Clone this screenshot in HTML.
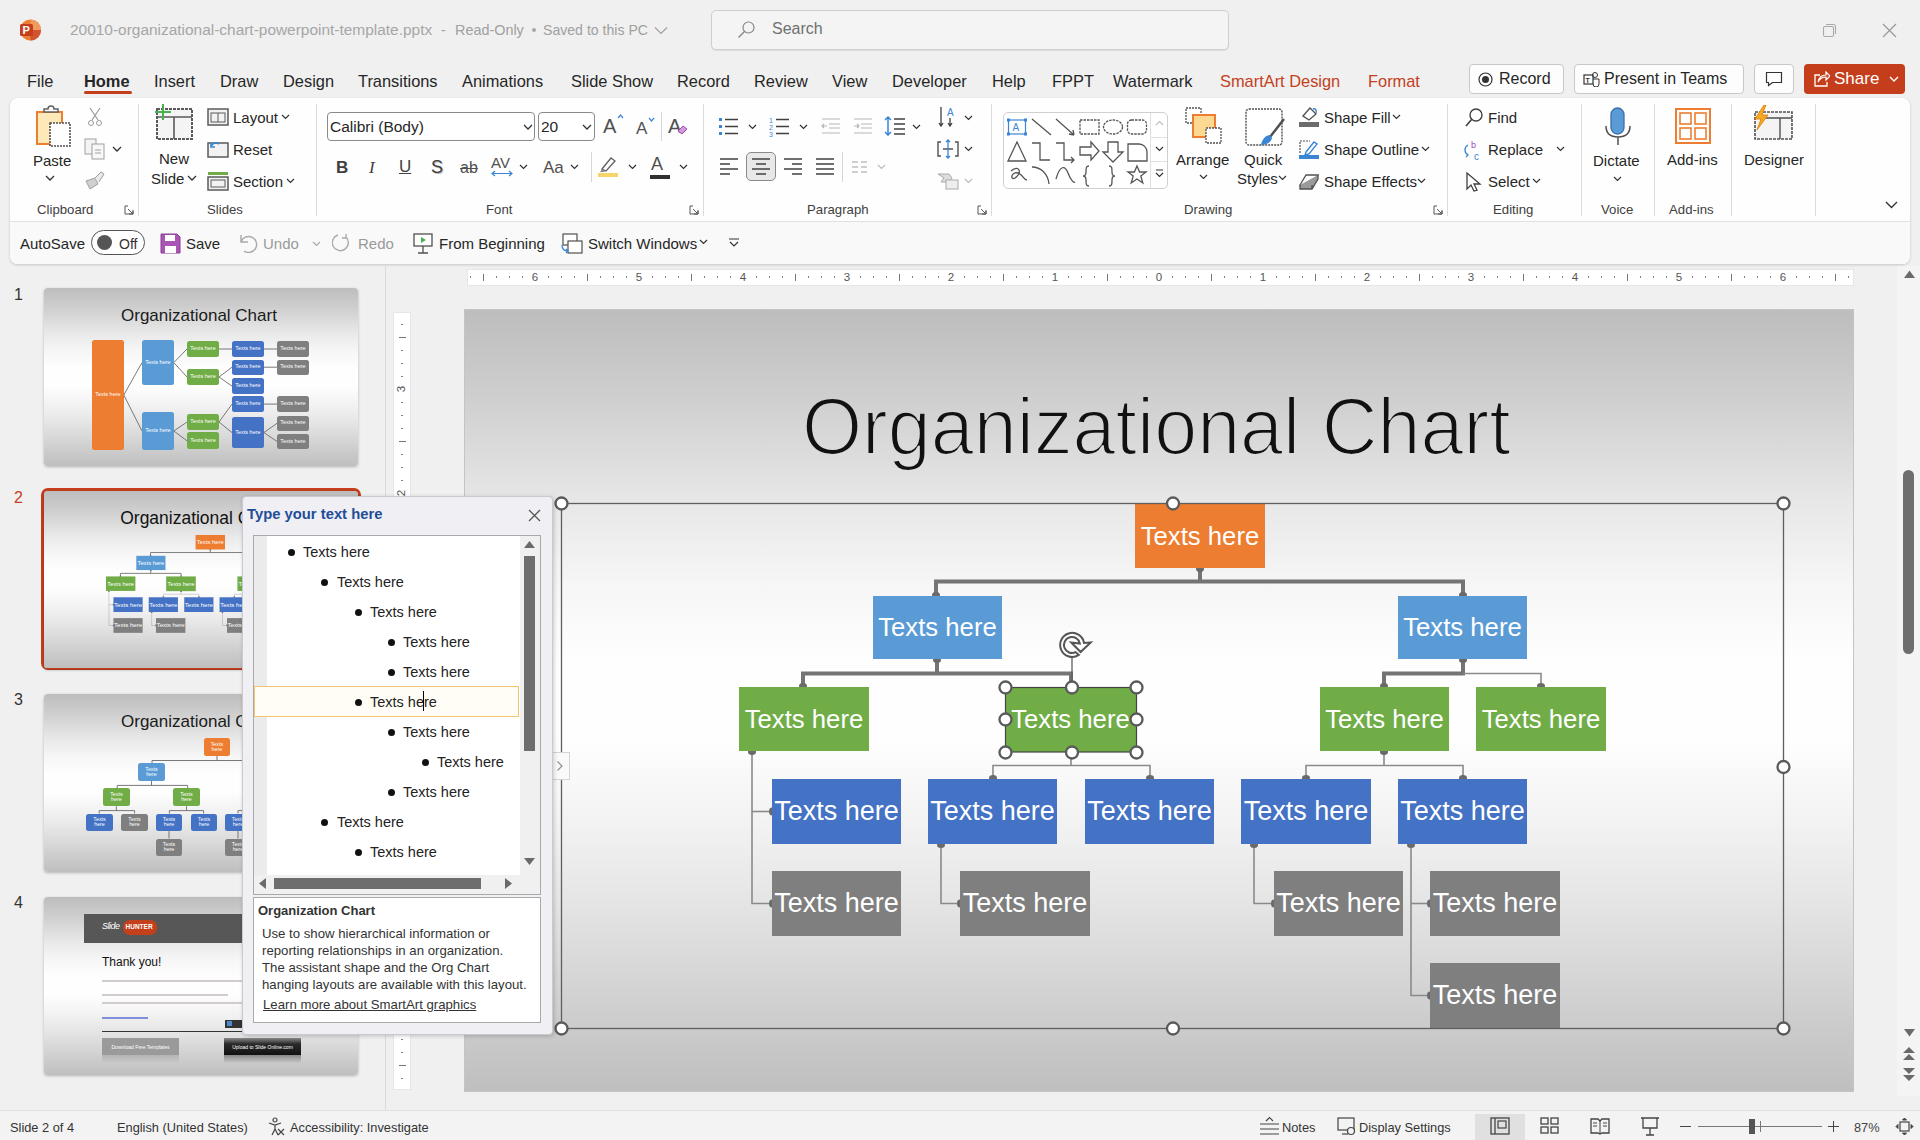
<!DOCTYPE html>
<html><head><meta charset="utf-8">
<style>
*{box-sizing:border-box;margin:0;padding:0}
html,body{width:1920px;height:1140px;overflow:hidden;background:#f0f0f0;font-family:"Liberation Sans",sans-serif;color:#262626}
.a{position:absolute}
.t{position:absolute;white-space:nowrap;line-height:1}
/* title */
#ppicon{left:19px;top:19px;width:22px;height:22px;border-radius:50%;background:#c43e1c}
#fname{left:70px;top:22px;font-size:15.45px;color:#a6a6a6}
#search{left:711px;top:10px;width:518px;height:40px;border:1px solid #cfcfcf;border-radius:5px;background:#f4f4f4;box-shadow:0 1px 1px rgba(0,0,0,.08)}
/* tabs */
.tab{position:absolute;top:73px;font-size:16.4px;color:#262626;white-space:nowrap;line-height:1}
.btn{position:absolute;border:1px solid #c8c8c8;border-radius:4px;background:#fdfdfd}
/* ribbon */
#ribbon{left:10px;top:98px;width:1900px;height:166px;background:#fefefe;border-radius:8px;box-shadow:0 1px 3px rgba(0,0,0,.18)}
.sep{position:absolute;width:1px;background:#dcdcdc}
.glab{position:absolute;top:203px;font-size:13.2px;color:#404040;white-space:nowrap;line-height:1}
.rt{position:absolute;font-size:15px;color:#262626;white-space:nowrap;line-height:1}
/* slide */
#slide{left:465px;top:310px;width:1388px;height:781px;box-shadow:0 0 0 1px #c4c4c4}
.slidebg{background:linear-gradient(#bdbdbd 0%,#d0d0d0 12%,#e8e8e8 25%,#f6f6f6 35%,#fefefe 45%,#fefefe 55%,#f2f2f2 66%,#e6e6e6 75%,#d8d8d8 84%,#cbcbcb 92%,#bfbfbf 100%)}
.thumb{width:314px;height:178px;overflow:hidden;border-radius:4px;box-shadow:0 1px 3px rgba(0,0,0,.25)}
.bx{position:absolute;color:#fff;font-size:27px;display:flex;align-items:center;justify-content:center;white-space:nowrap}
.or{background:#ed7d31}.lb{background:#5b9bd5}.gr{background:#70ad47}.db{background:#4472c4}.gy{background:#7f7f7f}
.tp{position:absolute;font-size:9px;color:#111;line-height:1}
.tpt{position:absolute;font-size:14.5px;color:#222;white-space:nowrap;line-height:1}
.status{position:absolute;top:1122px;font-size:12.8px;color:#333;white-space:nowrap;line-height:1}
</style></head>
<body>
<!-- TITLE BAR -->
<svg class="a" style="left:18px;top:18px" width="24" height="24" viewBox="0 0 24 24"><circle cx="12.5" cy="12" r="10.5" fill="#ed7d31"/><path d="M12.5 1.5A10.5 10.5 0 0 1 23 12H12.5z" fill="#f09a5f"/><path d="M12.5 12H23A10.5 10.5 0 0 1 12.5 22.5z" fill="#d35230"/><rect x="2" y="6" width="13" height="12" rx="1.5" fill="#c43e1c"/><text x="4.6" y="15.8" font-size="11" font-weight="bold" fill="#fff" font-family="Liberation Sans">P</text></svg>
<div class="t" id="fname">20010-organizational-chart-powerpoint-template.pptx</div><div class="t" style="left:441px;top:23px;font-size:14.4px;color:#a0a0a0">-</div><div class="t" style="left:455px;top:23px;font-size:14.4px;color:#a0a0a0">Read-Only</div><div class="a" style="left:532px;top:28px;width:4px;height:4px;border-radius:50%;background:#a8a8a8"></div><div class="t" style="left:543px;top:23px;font-size:14.1px;color:#a0a0a0">Saved to this PC</div>
<div class="a" id="search"></div>
<div class="t" style="left:772px;top:21px;font-size:16px;color:#707070">Search</div>

<!-- TABS -->
<div class="tab" style="left:27px">File</div>
<div class="tab" style="left:84px;font-weight:bold">Home</div>
<div class="a" style="left:84px;top:91px;width:48px;height:3px;background:#c43e1c;border-radius:2px"></div>
<div class="tab" style="left:154px">Insert</div>
<div class="tab" style="left:220px">Draw</div>
<div class="tab" style="left:283px">Design</div>
<div class="tab" style="left:358px">Transitions</div>
<div class="tab" style="left:462px">Animations</div>
<div class="tab" style="left:571px">Slide Show</div>
<div class="tab" style="left:677px">Record</div>
<div class="tab" style="left:754px">Review</div>
<div class="tab" style="left:832px">View</div>
<div class="tab" style="left:892px">Developer</div>
<div class="tab" style="left:992px">Help</div>
<div class="tab" style="left:1052px">FPPT</div>
<div class="tab" style="left:1113px">Watermark</div>
<div class="tab" style="left:1220px;color:#c43e1c">SmartArt Design</div>
<div class="tab" style="left:1368px;color:#c43e1c">Format</div>

<!-- RIBBON -->
<div class="a" id="ribbon"></div>
<div class="a" style="left:10px;top:221px;width:1900px;height:1px;background:#e1e1e1"></div>
<div class="a" style="left:10px;top:222px;width:1900px;height:42px;background:#f9f9f9;border-radius:0 0 8px 8px"></div>
<!-- Clipboard -->
<svg class="a" style="left:34px;top:104px" width="40" height="44" viewBox="0 0 40 44">
 <rect x="3" y="8" width="25" height="32" fill="#fde9b8" stroke="#ed7d31" stroke-width="2"/>
 <path d="M10 8v-3h4a3 3 0 0 1 6 0h4v3z" fill="#fff" stroke="#616161" stroke-width="1.5"/>
 <rect x="16" y="19" width="20" height="23" fill="#fff" stroke="#505050" stroke-width="1.6" stroke-dasharray="2 1"/>
</svg>
<div class="rt" style="left:33px;top:153px">Paste</div>
<svg class="a" style="left:45px;top:175px" width="10" height="7"><path d="M1 1l4 4 4-4" fill="none" stroke="#333" stroke-width="1.3"/></svg>
<svg class="a" style="left:86px;top:107px" width="18" height="20" viewBox="0 0 18 20"><path d="M4 1l8 12M14 1L6 13" stroke="#9a9a9a" stroke-width="1.2" fill="none"/><circle cx="5" cy="16" r="2.5" fill="none" stroke="#9a9a9a"/><circle cx="13" cy="16" r="2.5" fill="none" stroke="#9a9a9a"/></svg>
<svg class="a" style="left:84px;top:138px" width="24" height="22" viewBox="0 0 24 22"><rect x="1" y="1" width="11" height="15" fill="#f4f4f4" stroke="#a0a0a0"/><rect x="8" y="6" width="12" height="15" fill="#f8f8f8" stroke="#a0a0a0"/><path d="M11 12h6M11 15h6" stroke="#a0a0a0"/></svg>
<svg class="a" style="left:112px;top:146px" width="10" height="7"><path d="M1 1l4 4 4-4" fill="none" stroke="#333" stroke-width="1.3"/></svg>
<svg class="a" style="left:84px;top:170px" width="22" height="20" viewBox="0 0 22 20"><path d="M2 11l9-3 3 6-8 5z" fill="#d0d0d0" stroke="#a0a0a0"/><path d="M11 8l6-6 3 2-5 8" fill="#e8e8e8" stroke="#a0a0a0"/></svg>
<div class="glab" style="left:37px">Clipboard</div>
<svg class="a" style="left:124px;top:205px" width="10" height="10"><path d="M1 1h3M1 1v8h8V6M4 4l5 5M9 5v4H5" fill="none" stroke="#555" stroke-width="1"/></svg>
<div class="sep" style="left:138px;top:104px;height:112px"></div>
<!-- Slides -->
<svg class="a" style="left:152px;top:103px" width="44" height="40" viewBox="0 0 44 40"><rect x="5" y="6" width="35" height="30" fill="#f4f4f4" stroke="#5a5a5a" stroke-width="2" stroke-dasharray="3 1"/><path d="M5 14h35M22 14v22" stroke="#5a5a5a" stroke-width="1.6"/><path d="M11 1v16M3 9h16" stroke="#4caf50" stroke-width="2"/></svg>
<div class="rt" style="left:159px;top:151px">New</div>
<div class="rt" style="left:151px;top:171px">Slide</div>
<svg class="a" style="left:187px;top:175px" width="10" height="7"><path d="M1 1l4 4 4-4" fill="none" stroke="#333" stroke-width="1.3"/></svg>
<svg class="a" style="left:207px;top:108px" width="22" height="18" viewBox="0 0 22 18"><rect x="1" y="1" width="20" height="16" fill="#f2f2f2" stroke="#5a5a5a" stroke-width="1.5"/><rect x="4" y="5" width="14" height="9" fill="none" stroke="#5a5a5a"/><path d="M11 5v9" stroke="#5a5a5a"/></svg>
<div class="rt" style="left:233px;top:110px">Layout</div>
<svg class="a" style="left:281px;top:114px" width="9" height="6"><path d="M1 1l3.5 3.5 3.5-3.5" fill="none" stroke="#333" stroke-width="1.2"/></svg>
<svg class="a" style="left:207px;top:140px" width="22" height="18" viewBox="0 0 22 18"><rect x="1" y="3" width="20" height="14" fill="#f2f2f2" stroke="#5a5a5a" stroke-width="1.5"/><path d="M4 7a5 5 0 0 1 8-3M4 3v4h4" fill="none" stroke="#3a86d4" stroke-width="1.6"/></svg>
<div class="rt" style="left:233px;top:142px">Reset</div>
<svg class="a" style="left:207px;top:171px" width="22" height="20" viewBox="0 0 22 20"><rect x="1" y="1" width="20" height="3" fill="#70ad47"/><rect x="1" y="6" width="20" height="13" fill="#f2f2f2" stroke="#5a5a5a" stroke-width="1.5"/><rect x="4" y="9" width="14" height="7" fill="none" stroke="#5a5a5a"/></svg>
<div class="rt" style="left:233px;top:174px">Section</div>
<svg class="a" style="left:286px;top:178px" width="9" height="6"><path d="M1 1l3.5 3.5 3.5-3.5" fill="none" stroke="#333" stroke-width="1.2"/></svg>
<div class="glab" style="left:207px">Slides</div>
<div class="sep" style="left:316px;top:104px;height:112px"></div>
<!-- Font -->
<div class="a" style="left:327px;top:112px;width:208px;height:29px;border:1px solid #8a8a8a;border-radius:4px;background:#fff"></div>
<div class="rt" style="left:330px;top:119px;font-size:15.5px">Calibri (Body)</div>
<svg class="a" style="left:523px;top:124px" width="10" height="7"><path d="M1 1l4 4 4-4" fill="none" stroke="#333" stroke-width="1.3"/></svg>
<div class="a" style="left:538px;top:112px;width:57px;height:29px;border:1px solid #8a8a8a;border-radius:4px;background:#fff"></div>
<div class="rt" style="left:541px;top:119px;font-size:15.5px">20</div>
<svg class="a" style="left:582px;top:124px" width="10" height="7"><path d="M1 1l4 4 4-4" fill="none" stroke="#333" stroke-width="1.3"/></svg>
<div class="rt" style="left:603px;top:116px;font-size:20px;color:#505050">A</div><svg class="a" style="left:617px;top:114px" width="7" height="5"><path d="M1 4l2.5-3 2.5 3" fill="none" stroke="#3a86d4" stroke-width="1.2"/></svg>
<div class="rt" style="left:636px;top:120px;font-size:17px;color:#505050">A</div><svg class="a" style="left:648px;top:117px" width="7" height="5"><path d="M1 1l2.5 3 2.5-3" fill="none" stroke="#3a86d4" stroke-width="1.2"/></svg>
<div class="sep" style="left:661px;top:112px;height:29px;background:#d6d6d6"></div>
<div class="rt" style="left:668px;top:116px;font-size:20px;color:#505050">A</div><svg class="a" style="left:676px;top:125px" width="12" height="10"><path d="M2 6l5-5 4 3-5 5z" fill="#d29be0" stroke="#9b4db4"/></svg>
<div class="rt" style="left:336px;top:159px;font-size:17px;font-weight:bold;color:#404040">B</div>
<div class="rt" style="left:369px;top:159px;font-size:17px;font-style:italic;font-family:'Liberation Serif',serif;color:#404040">I</div>
<div class="rt" style="left:399px;top:158px;font-size:17px;text-decoration:underline;color:#404040">U</div>
<div class="rt" style="left:431px;top:158px;font-size:18px;color:#404040;text-shadow:1px 1px 0 #bbb">S</div>
<div class="rt" style="left:460px;top:160px;font-size:16px;text-decoration:line-through;color:#505050">ab</div>
<div class="rt" style="left:491px;top:155px;font-size:15px;color:#505050">AV</div>
<svg class="a" style="left:491px;top:170px" width="22" height="7"><path d="M1 3.5h20M4 1l-3 2.5 3 2.5M18 1l3 2.5-3 2.5" fill="none" stroke="#3a86d4" stroke-width="1.2"/></svg>
<svg class="a" style="left:519px;top:164px" width="9" height="6"><path d="M1 1l3.5 3.5 3.5-3.5" fill="none" stroke="#333" stroke-width="1.2"/></svg>
<div class="rt" style="left:543px;top:159px;font-size:17px;color:#505050">Aa</div>
<svg class="a" style="left:570px;top:164px" width="9" height="6"><path d="M1 1l3.5 3.5 3.5-3.5" fill="none" stroke="#333" stroke-width="1.2"/></svg>
<div class="sep" style="left:591px;top:152px;height:30px;background:#d6d6d6"></div>
<svg class="a" style="left:598px;top:155px" width="22" height="23" viewBox="0 0 22 23"><path d="M4 14l9-11 4 3-9 10z" fill="#fff" stroke="#606060" stroke-width="1.3"/><path d="M4 14l-2 3h5" fill="#888"/><rect x="0" y="18" width="20" height="4" fill="#f7d56a"/></svg>
<svg class="a" style="left:628px;top:164px" width="9" height="6"><path d="M1 1l3.5 3.5 3.5-3.5" fill="none" stroke="#333" stroke-width="1.2"/></svg>
<div class="rt" style="left:651px;top:155px;font-size:18px;color:#505050">A</div>
<div class="a" style="left:650px;top:175px;width:20px;height:4px;background:#303030"></div>
<svg class="a" style="left:679px;top:164px" width="9" height="6"><path d="M1 1l3.5 3.5 3.5-3.5" fill="none" stroke="#333" stroke-width="1.2"/></svg>
<div class="glab" style="left:486px">Font</div>
<svg class="a" style="left:689px;top:205px" width="10" height="10"><path d="M1 1h3M1 1v8h8V6M4 4l5 5M9 5v4H5" fill="none" stroke="#555" stroke-width="1"/></svg>
<div class="sep" style="left:703px;top:104px;height:112px"></div>
<!-- Paragraph -->
<svg class="a" style="left:718px;top:116px" width="22" height="20" viewBox="0 0 22 20"><rect x="1" y="2" width="3" height="3" fill="#3a86d4"/><rect x="1" y="9" width="3" height="3" fill="#3a86d4"/><rect x="1" y="16" width="3" height="3" fill="#3a86d4"/><path d="M7 3.5h13M7 10.5h13M7 17.5h13" stroke="#404040" stroke-width="1.3"/></svg>
<svg class="a" style="left:748px;top:124px" width="9" height="6"><path d="M1 1l3.5 3.5 3.5-3.5" fill="none" stroke="#333" stroke-width="1.2"/></svg>
<svg class="a" style="left:769px;top:115px" width="22" height="22" viewBox="0 0 22 22"><text x="0" y="8" font-size="7" fill="#3a86d4" font-family="Liberation Sans">1</text><text x="0" y="15" font-size="7" fill="#3a86d4" font-family="Liberation Sans">2</text><text x="0" y="22" font-size="7" fill="#3a86d4" font-family="Liberation Sans">3</text><path d="M7 4.5h13M7 11.5h13M7 18.5h13" stroke="#404040" stroke-width="1.3"/></svg>
<svg class="a" style="left:799px;top:124px" width="9" height="6"><path d="M1 1l3.5 3.5 3.5-3.5" fill="none" stroke="#333" stroke-width="1.2"/></svg>
<svg class="a" style="left:821px;top:117px" width="20" height="18" viewBox="0 0 20 18"><path d="M1 2h18M8 7h11M8 11h11M1 16h18M6 9H1M3 7l-2 2 2 2" stroke="#b5b5b5" stroke-width="1.2" fill="none"/></svg>
<svg class="a" style="left:853px;top:117px" width="20" height="18" viewBox="0 0 20 18"><path d="M1 2h18M8 7h11M8 11h11M1 16h18M1 9h5M4 7l2 2-2 2" stroke="#b5b5b5" stroke-width="1.2" fill="none"/></svg>
<svg class="a" style="left:884px;top:116px" width="22" height="20" viewBox="0 0 22 20"><path d="M4 1v18M1 4l3-3 3 3M1 16l3 3 3-3" stroke="#3a86d4" stroke-width="1.5" fill="none"/><path d="M10 3h11M10 8h11M10 13h11M10 18h11" stroke="#404040" stroke-width="1.4"/></svg>
<svg class="a" style="left:912px;top:124px" width="9" height="6"><path d="M1 1l3.5 3.5 3.5-3.5" fill="none" stroke="#333" stroke-width="1.2"/></svg>
<svg class="a" style="left:938px;top:106px" width="20" height="22" viewBox="0 0 20 22"><path d="M3 1v19M1 17l2 3 2-3M12 12v8M10 17l2 3 2-3" stroke="#404040" stroke-width="1.3" fill="none"/><text x="9" y="10" font-size="10" fill="#3a86d4" font-family="Liberation Sans">A</text></svg>
<svg class="a" style="left:964px;top:115px" width="9" height="6"><path d="M1 1l3.5 3.5 3.5-3.5" fill="none" stroke="#333" stroke-width="1.2"/></svg>
<svg class="a" style="left:937px;top:139px" width="22" height="20" viewBox="0 0 22 20"><path d="M4 3H1v14h3M18 3h3v14h-3M6 10h10" stroke="#505050" stroke-width="1.4" fill="none"/><path d="M11 1v18M9 3l2-2 2 2M9 17l2 2 2-2" stroke="#3a86d4" stroke-width="1.3" fill="none"/></svg>
<svg class="a" style="left:964px;top:146px" width="9" height="6"><path d="M1 1l3.5 3.5 3.5-3.5" fill="none" stroke="#333" stroke-width="1.2"/></svg>
<svg class="a" style="left:937px;top:172px" width="22" height="18" viewBox="0 0 22 18"><path d="M1 2h11l3 4-3 4H4l3-4z" fill="#ddd" stroke="#aaa"/><rect x="9" y="8" width="12" height="9" fill="#eee" stroke="#aaa"/></svg>
<svg class="a" style="left:964px;top:178px" width="9" height="6"><path d="M1 1l3.5 3.5 3.5-3.5" fill="none" stroke="#bbb" stroke-width="1.2"/></svg>
<svg class="a" style="left:719px;top:157px" width="20" height="18" viewBox="0 0 20 18"><path d="M1 2h18M1 7h10M1 12h18M1 17h10" stroke="#404040" stroke-width="1.3"/></svg>
<div class="a" style="left:746px;top:152px;width:30px;height:29px;border:1px solid #8a8a8a;border-radius:5px;background:#e8e8e8"></div>
<svg class="a" style="left:751px;top:157px" width="20" height="18" viewBox="0 0 20 18"><path d="M1 2h18M5 7h10M1 12h18M5 17h10" stroke="#404040" stroke-width="1.3"/></svg>
<svg class="a" style="left:783px;top:157px" width="20" height="18" viewBox="0 0 20 18"><path d="M1 2h18M9 7h10M1 12h18M9 17h10" stroke="#404040" stroke-width="1.3"/></svg>
<svg class="a" style="left:815px;top:157px" width="20" height="18" viewBox="0 0 20 18"><path d="M1 2h18M1 7h18M1 12h18M1 17h18" stroke="#404040" stroke-width="1.3"/></svg>
<div class="sep" style="left:842px;top:152px;height:30px;background:#d6d6d6"></div>
<svg class="a" style="left:851px;top:161px" width="18" height="12" viewBox="0 0 18 12"><path d="M1 1h6M1 6h6M1 11h6M10 1h6M10 6h6M10 11h6" stroke="#c0c0c0" stroke-width="1.3"/></svg>
<svg class="a" style="left:877px;top:164px" width="9" height="6"><path d="M1 1l3.5 3.5 3.5-3.5" fill="none" stroke="#bbb" stroke-width="1.2"/></svg>
<div class="glab" style="left:807px">Paragraph</div>
<svg class="a" style="left:977px;top:205px" width="10" height="10"><path d="M1 1h3M1 1v8h8V6M4 4l5 5M9 5v4H5" fill="none" stroke="#555" stroke-width="1"/></svg>
<div class="sep" style="left:991px;top:104px;height:112px"></div>
<!-- Drawing -->
<div class="a" style="left:1003px;top:112px;width:165px;height:77px;border:1px solid #d0d0d0;border-radius:5px;background:#fff"></div>
<div class="a" style="left:1150px;top:113px;width:1px;height:75px;background:#e0e0e0"></div>
<div class="a" style="left:1151px;top:137px;width:16px;height:1px;background:#e0e0e0"></div>
<div class="a" style="left:1151px;top:161px;width:16px;height:1px;background:#e0e0e0"></div>
<svg class="a" style="left:1155px;top:120px" width="9" height="6"><path d="M1 5l3.5-3.5 3.5 3.5" fill="none" stroke="#c0c0c0" stroke-width="1.2"/></svg>
<svg class="a" style="left:1155px;top:146px" width="9" height="6"><path d="M1 1l3.5 3.5 3.5-3.5" fill="none" stroke="#333" stroke-width="1.2"/></svg>
<svg class="a" style="left:1155px;top:169px" width="9" height="10"><path d="M1 1h7M1 4l3.5 3.5 3.5-3.5" fill="none" stroke="#333" stroke-width="1.2"/></svg>
<svg class="a" style="left:1005px;top:115px" width="144" height="72" viewBox="0 0 144 72" fill="none" stroke="#555" stroke-width="1.3">
 <rect x="3.5" y="5" width="17" height="14" stroke="#3a86d4" stroke-width="1.2"/><rect x="2" y="3.5" width="3" height="3" fill="#3a86d4" stroke="none"/><rect x="19" y="3.5" width="3" height="3" fill="#3a86d4" stroke="none"/><rect x="2" y="17.5" width="3" height="3" fill="#3a86d4" stroke="none"/><rect x="19" y="17.5" width="3" height="3" fill="#3a86d4" stroke="none"/><text x="7.5" y="16" font-size="10" fill="#3a86d4" stroke="none" font-family="Liberation Sans">A</text>
 <path d="M27 4L46 20M51 4L69 20M69 20l-5-1M69 20l-1-5"/>
 <rect x="75" y="5" width="19" height="14" stroke-dasharray="2.5 1"/>
 <ellipse cx="108" cy="12" rx="9.5" ry="7" stroke-dasharray="2.5 1"/>
 <rect x="122.5" y="5" width="19" height="14" rx="4" stroke-dasharray="2.5 1"/>
 <path d="M3 46L12 27L21 46z M27 28h8v17h10 M51 28h8v17h10M66 42l3 3-3 3 M75 32h11v-5l8 9-8 9v-5h-11z M103 27h10v10h5l-10 10-10-10h5z M123 29h11a8 8 0 0 1 8 8v9h-19z"/>
 <path d="M6 56c8-7 12 2 4 7-6 3-3-9 5-4 4 3 4 6 7 6 M27 52c9 0 16 7 17 17 M51 64C55 50 60 50 63 58S69 68 70 67 M84 51c-3 0-3 2-3 6 0 3-1 4-3 4 2 0 3 1 3 4 0 4 0 6 3 6 M104 51c3 0 3 2 3 6 0 3 1 4 3 4-2 0-3 1-3 4 0 4 0 6-3 6 M132 51l2.6 6h6.4l-5.2 4 2 7-5.8-4-5.8 4 2-7-5.2-4h6.4z"/>
</svg>
<svg class="a" style="left:1185px;top:107px" width="38" height="38" viewBox="0 0 38 38"><rect x="1" y="1" width="15" height="15" fill="#fff" stroke="#505050" stroke-width="1.3" stroke-dasharray="2 1"/><rect x="8" y="8" width="22" height="22" fill="#fcd891" stroke="#ed7d31" stroke-width="2"/><rect x="21" y="21" width="15" height="15" fill="#fff" stroke="#505050" stroke-width="1.3" stroke-dasharray="2 1"/></svg>
<div class="rt" style="left:1176px;top:152px">Arrange</div>
<svg class="a" style="left:1199px;top:174px" width="9" height="6"><path d="M1 1l3.5 3.5 3.5-3.5" fill="none" stroke="#333" stroke-width="1.2"/></svg>
<svg class="a" style="left:1244px;top:107px" width="42" height="42" viewBox="0 0 42 42"><rect x="2" y="2" width="36" height="36" rx="3" fill="#fff" stroke="#505050" stroke-width="1.4" stroke-dasharray="2 1"/><path d="M40 12L26 30" stroke="#505050" stroke-width="2.5"/><path d="M26 28c-4 0-8 4-9 10 6 0 10-3 11-7z" fill="#3a86d4"/></svg>
<div class="rt" style="left:1244px;top:152px">Quick</div>
<div class="rt" style="left:1237px;top:171px">Styles</div>
<svg class="a" style="left:1278px;top:175px" width="9" height="6"><path d="M1 1l3.5 3.5 3.5-3.5" fill="none" stroke="#333" stroke-width="1.2"/></svg>
<svg class="a" style="left:1298px;top:106px" width="22" height="22" viewBox="0 0 22 22"><path d="M5 10l7-8 6 6-7 6z" fill="#fff" stroke="#505050" stroke-width="1.3"/><path d="M15 3c2-1 4 1 3 4" stroke="#3a86d4" stroke-width="1.4" fill="none"/><rect x="1" y="16" width="20" height="5" fill="#6b6b6b"/></svg>
<div class="rt" style="left:1324px;top:110px">Shape Fill</div>
<svg class="a" style="left:1392px;top:114px" width="9" height="6"><path d="M1 1l3.5 3.5 3.5-3.5" fill="none" stroke="#333" stroke-width="1.2"/></svg>
<svg class="a" style="left:1298px;top:138px" width="22" height="22" viewBox="0 0 22 22"><path d="M2 15V3h10" stroke="#505050" stroke-width="1.2" fill="none" stroke-dasharray="2 1"/><path d="M8 14l8-10 3 2-8 10-4 1z" fill="#fff" stroke="#3a86d4" stroke-width="1.4"/><rect x="1" y="17" width="20" height="4" fill="#3a86d4"/></svg>
<div class="rt" style="left:1324px;top:142px">Shape Outline</div>
<svg class="a" style="left:1421px;top:146px" width="9" height="6"><path d="M1 1l3.5 3.5 3.5-3.5" fill="none" stroke="#333" stroke-width="1.2"/></svg>
<svg class="a" style="left:1298px;top:171px" width="22" height="20" viewBox="0 0 22 20"><path d="M2 14l6-10h12l-6 10z" fill="#fff" stroke="#505050" stroke-width="1.3"/><path d="M2 14v4h12l6-10v-4M14 14v4" fill="#9a9a9a" stroke="#505050" stroke-width="1.3"/></svg>
<div class="rt" style="left:1324px;top:174px">Shape Effects</div>
<svg class="a" style="left:1417px;top:178px" width="9" height="6"><path d="M1 1l3.5 3.5 3.5-3.5" fill="none" stroke="#333" stroke-width="1.2"/></svg>
<div class="glab" style="left:1184px">Drawing</div>
<svg class="a" style="left:1433px;top:205px" width="10" height="10"><path d="M1 1h3M1 1v8h8V6M4 4l5 5M9 5v4H5" fill="none" stroke="#555" stroke-width="1"/></svg>
<div class="sep" style="left:1447px;top:104px;height:112px"></div>
<!-- Editing -->
<svg class="a" style="left:1464px;top:107px" width="20" height="20" viewBox="0 0 20 20"><circle cx="12" cy="8" r="6" fill="none" stroke="#404040" stroke-width="1.4"/><path d="M8 12l-6 7" stroke="#404040" stroke-width="1.6"/></svg>
<div class="rt" style="left:1488px;top:110px">Find</div>
<svg class="a" style="left:1462px;top:139px" width="22" height="22" viewBox="0 0 22 22"><text x="9" y="9" font-size="9" fill="#9b4db4" font-family="Liberation Sans">b</text><text x="12" y="21" font-size="10" fill="#3a86d4" font-family="Liberation Sans">c</text><path d="M6 6c-4 2-4 8 0 10M4 14l2 2-2 2" fill="none" stroke="#3a86d4" stroke-width="1.3"/></svg>
<div class="rt" style="left:1488px;top:142px">Replace</div>
<svg class="a" style="left:1556px;top:146px" width="9" height="6"><path d="M1 1l3.5 3.5 3.5-3.5" fill="none" stroke="#333" stroke-width="1.2"/></svg>
<svg class="a" style="left:1465px;top:172px" width="18" height="20" viewBox="0 0 18 20"><path d="M2 1v16l4-4 3 6 3-1-3-6h6z" fill="#fff" stroke="#404040" stroke-width="1.3"/></svg>
<div class="rt" style="left:1488px;top:174px">Select</div>
<svg class="a" style="left:1532px;top:178px" width="9" height="6"><path d="M1 1l3.5 3.5 3.5-3.5" fill="none" stroke="#333" stroke-width="1.2"/></svg>
<div class="glab" style="left:1493px">Editing</div>
<div class="sep" style="left:1581px;top:104px;height:112px"></div>
<!-- Voice -->
<svg class="a" style="left:1604px;top:106px" width="28" height="40" viewBox="0 0 28 40"><rect x="7" y="2" width="13" height="26" rx="6.5" fill="#5b9bd5" stroke="#3a6fb0" stroke-width="1.3"/><path d="M2 20c0 8 5 11 12 11s12-3 12-11M14 31v8" fill="none" stroke="#505050" stroke-width="1.5"/></svg>
<div class="rt" style="left:1593px;top:153px">Dictate</div>
<svg class="a" style="left:1613px;top:176px" width="9" height="6"><path d="M1 1l3.5 3.5 3.5-3.5" fill="none" stroke="#333" stroke-width="1.2"/></svg>
<div class="glab" style="left:1601px">Voice</div>
<div class="sep" style="left:1654px;top:104px;height:112px"></div>
<!-- Add-ins -->
<svg class="a" style="left:1675px;top:108px" width="36" height="36" viewBox="0 0 36 36"><rect x="1" y="1" width="34" height="34" fill="none" stroke="#ed7d31" stroke-width="2"/><rect x="5" y="5" width="11" height="11" fill="none" stroke="#ed7d31" stroke-width="1.6"/><rect x="20" y="5" width="11" height="11" fill="none" stroke="#ed7d31" stroke-width="1.6"/><rect x="5" y="20" width="11" height="11" fill="none" stroke="#ed7d31" stroke-width="1.6"/><rect x="20" y="20" width="11" height="11" fill="none" stroke="#ed7d31" stroke-width="1.6"/></svg>
<div class="rt" style="left:1667px;top:152px">Add-ins</div>
<div class="glab" style="left:1669px">Add-ins</div>
<div class="sep" style="left:1731px;top:104px;height:112px"></div>
<!-- Designer -->
<svg class="a" style="left:1752px;top:105px" width="42" height="36" viewBox="0 0 42 36"><rect x="3" y="7" width="37" height="27" fill="#f4f4f4" stroke="#505050" stroke-width="1.6" stroke-dasharray="3 1"/><path d="M3 13h37M28 13v21" stroke="#505050" stroke-width="1.4"/><path d="M12 0L3 14h6l-4 11 11-15h-6l4-10z" fill="#f7a823" stroke="#e07b00" stroke-width=".8"/></svg>
<div class="rt" style="left:1744px;top:152px">Designer</div>
<div class="sep" style="left:1815px;top:104px;height:112px"></div>
<svg class="a" style="left:1885px;top:201px" width="13" height="8"><path d="M1 1l5.5 5.5 5.5-5.5" fill="none" stroke="#333" stroke-width="1.4"/></svg>

<!-- Tab row buttons -->
<div class="btn" style="left:1469px;top:64px;width:95px;height:30px"></div>
<svg class="a" style="left:1478px;top:72px" width="15" height="15"><circle cx="7.5" cy="7.5" r="6.5" fill="none" stroke="#333" stroke-width="1.2"/><circle cx="7.5" cy="7.5" r="3.5" fill="#333"/></svg>
<div class="rt" style="left:1499px;top:71px;font-size:16px">Record</div>
<div class="btn" style="left:1574px;top:64px;width:170px;height:30px"></div>
<svg class="a" style="left:1583px;top:71px" width="17" height="16" viewBox="0 0 17 16"><rect x="1" y="4" width="9" height="9" fill="#fff" stroke="#333" stroke-width="1.2"/><text x="2.5" y="11.5" font-size="7" font-weight="bold" fill="#333" font-family="Liberation Sans">T</text><circle cx="12" cy="4" r="2.5" fill="none" stroke="#333"/><path d="M10 8h6v5a3 3 0 0 1-6 0" fill="none" stroke="#333"/></svg>
<div class="rt" style="left:1604px;top:71px;font-size:16px">Present in Teams</div>
<div class="btn" style="left:1754px;top:64px;width:40px;height:30px"></div>
<svg class="a" style="left:1765px;top:71px" width="18" height="16" viewBox="0 0 18 16"><path d="M1.5 1.5h15v10h-9l-4 3v-3h-2z" fill="none" stroke="#333" stroke-width="1.2"/></svg>
<div class="a" style="left:1804px;top:64px;width:101px;height:30px;background:#c43e1c;border-radius:4px"></div>
<svg class="a" style="left:1813px;top:71px" width="17" height="16" viewBox="0 0 17 16"><path d="M7 4H2v11h12v-4" fill="none" stroke="#fff" stroke-width="1.3"/><path d="M5 11c1-5 4-7 8-7V1l4 4-4 4V6c-3 0-6 1-8 5z" fill="none" stroke="#fff" stroke-width="1.2"/></svg>
<div class="rt" style="left:1834px;top:70px;font-size:17px;color:#fff">Share</div>
<svg class="a" style="left:1889px;top:76px" width="10" height="7"><path d="M1 1l4 4 4-4" fill="none" stroke="#fff" stroke-width="1.4"/></svg>

<!-- window controls -->
<svg class="a" style="left:1822px;top:23px" width="15" height="15"><rect x="1.5" y="3.5" width="10" height="10" rx="1.5" fill="none" stroke="#aaa" stroke-width="1.1"/><path d="M4 1.5h7.5a2 2 0 0 1 2 2V11" fill="none" stroke="#aaa" stroke-width="1.1"/></svg>
<svg class="a" style="left:1882px;top:23px" width="15" height="15"><path d="M1 1l13 13M14 1L1 14" stroke="#999" stroke-width="1.2"/></svg>
<svg class="a" style="left:737px;top:20px" width="19" height="19"><circle cx="11.5" cy="7.5" r="5.5" fill="none" stroke="#888" stroke-width="1.2"/><path d="M7.5 11.5L1.5 17.5" stroke="#888" stroke-width="1.4"/></svg>
<svg class="a" style="left:654px;top:26px" width="14" height="9"><path d="M1 1.5l6 6 6-6" fill="none" stroke="#a0a0a0" stroke-width="1.2"/></svg>

<!-- QAT -->
<div class="rt" style="left:20px;top:236px">AutoSave</div>
<div class="a" style="left:91px;top:230px;width:54px;height:25px;border:1px solid #555;border-radius:13px;background:#fff"></div>
<div class="a" style="left:97px;top:235px;width:15px;height:15px;border-radius:50%;background:#555"></div>
<div class="rt" style="left:119px;top:237px;font-size:14px;color:#333">Off</div>
<svg class="a" style="left:160px;top:233px" width="21" height="21" viewBox="0 0 21 21"><path d="M1 1h16l3 3v16H1z" fill="#a855b3" stroke="#8b3f98"/><rect x="5" y="2" width="10" height="6" fill="#fff"/><rect x="5" y="13" width="11" height="7" fill="#fff"/></svg>
<div class="rt" style="left:186px;top:236px">Save</div>
<svg class="a" style="left:238px;top:233px" width="20" height="20" viewBox="0 0 20 20"><path d="M3 2v7h7" fill="none" stroke="#aaa" stroke-width="1.4"/><path d="M3 9a8 8 0 1 1 3 9" fill="none" stroke="#aaa" stroke-width="1.4"/></svg>
<div class="rt" style="left:263px;top:236px;color:#9a9a9a">Undo</div>
<svg class="a" style="left:312px;top:241px" width="9" height="6"><path d="M1 1l3.5 3.5 3.5-3.5" fill="none" stroke="#aaa" stroke-width="1.2"/></svg>
<svg class="a" style="left:332px;top:233px" width="20" height="20" viewBox="0 0 20 20"><path d="M6 2a8 8 0 1 0 8 2M14 1v4h-4" fill="none" stroke="#aaa" stroke-width="1.4"/></svg>
<div class="rt" style="left:358px;top:236px;color:#9a9a9a">Redo</div>
<svg class="a" style="left:413px;top:233px" width="20" height="21" viewBox="0 0 20 21"><rect x="1" y="1" width="18" height="12" fill="#fff" stroke="#505050" stroke-width="1.3"/><path d="M8 4v6l5-3z" fill="#4caf50"/><path d="M10 13v7M5 20h10" stroke="#505050" stroke-width="1.3"/></svg>
<div class="rt" style="left:439px;top:236px">From Beginning</div>
<svg class="a" style="left:561px;top:233px" width="22" height="21" viewBox="0 0 22 21"><rect x="2" y="1" width="14" height="11" fill="#fff" stroke="#505050" stroke-width="1.2"/><rect x="7" y="8" width="14" height="12" fill="#fff" stroke="#505050" stroke-width="1.2"/><path d="M1 12c0 4 2 6 6 6M5 16l2 2-2 2" stroke="#3a86d4" stroke-width="1.3" fill="none"/></svg>
<div class="rt" style="left:588px;top:236px">Switch Windows</div>
<svg class="a" style="left:699px;top:239px" width="9" height="6"><path d="M1 1l3.5 3.5 3.5-3.5" fill="none" stroke="#333" stroke-width="1.2"/></svg>
<svg class="a" style="left:728px;top:238px" width="12" height="10"><path d="M1 1h10M2 4l4 4 4-4" fill="none" stroke="#333" stroke-width="1.2"/></svg>

<!-- MAIN AREA -->
<div class="a" style="left:385px;top:265px;width:1px;height:845px;background:#dadada"></div>
<!-- slide numbers -->
<div class="t" style="left:14px;top:287px;font-size:16px;color:#333">1</div>
<div class="t" style="left:14px;top:490px;font-size:16px;color:#c43e1c">2</div>
<div class="t" style="left:14px;top:692px;font-size:16px;color:#333">3</div>
<div class="t" style="left:14px;top:895px;font-size:16px;color:#333">4</div>
<!-- thumbnail 1 -->
<div class="a thumb" style="left:44px;top:288px">
<!--T1BEGIN--><div class="a slidebg" style="left:0;top:0;width:314px;height:178px"></div><div class="t" style="left:77px;top:18.5px;font-size:17px;color:#1a1a1a">Organizational Chart</div><svg class="a" style="left:0;top:0" width="314" height="178"><path d="M79.8 107.0 L98.0 74.6" fill="none" stroke="#6a6a6a" stroke-width="0.9"/><path d="M79.8 107.0 L98.0 143.0" fill="none" stroke="#6a6a6a" stroke-width="0.9"/><path d="M129.8 74.6 L143.0 61.0" fill="none" stroke="#6a6a6a" stroke-width="0.9"/><path d="M129.8 74.6 L143.0 89.0" fill="none" stroke="#6a6a6a" stroke-width="0.9"/><path d="M129.8 143.0 L143.0 134.0" fill="none" stroke="#6a6a6a" stroke-width="0.9"/><path d="M129.8 143.0 L143.0 152.8" fill="none" stroke="#6a6a6a" stroke-width="0.9"/><path d="M175.0 61.0 L188.0 61.0" fill="none" stroke="#6a6a6a" stroke-width="0.9"/><path d="M175.0 89.0 L188.0 79.2" fill="none" stroke="#6a6a6a" stroke-width="0.9"/><path d="M175.0 89.0 L188.0 98.1" fill="none" stroke="#6a6a6a" stroke-width="0.9"/><path d="M175.0 134.0 L188.0 116.1" fill="none" stroke="#6a6a6a" stroke-width="0.9"/><path d="M175.0 134.0 L188.0 144.6" fill="none" stroke="#6a6a6a" stroke-width="0.9"/><path d="M219.9 61.0 L233.0 61.0" fill="none" stroke="#6a6a6a" stroke-width="0.9"/><path d="M219.9 79.2 L233.0 79.2" fill="none" stroke="#6a6a6a" stroke-width="0.9"/><path d="M219.9 116.1 L233.0 116.1" fill="none" stroke="#6a6a6a" stroke-width="0.9"/><path d="M219.9 144.6 L233.0 135.3" fill="none" stroke="#6a6a6a" stroke-width="0.9"/><path d="M219.9 144.6 L233.0 153.4" fill="none" stroke="#6a6a6a" stroke-width="0.9"/></svg><div class="a or" style="left:48.0px;top:52.2px;width:31.8px;height:109.8px;border-radius:2.5px;color:#fff;font-size:5.5px;line-height:1.05;display:flex;align-items:center;justify-content:center;text-align:center;white-space:nowrap">Texts here</div><div class="a lb" style="left:98.0px;top:52.2px;width:31.8px;height:44.8px;border-radius:2.5px;color:#fff;font-size:5.5px;line-height:1.05;display:flex;align-items:center;justify-content:center;text-align:center;white-space:nowrap">Texts here</div><div class="a lb" style="left:98.0px;top:124.3px;width:31.8px;height:37.7px;border-radius:2.5px;color:#fff;font-size:5.5px;line-height:1.05;display:flex;align-items:center;justify-content:center;text-align:center;white-space:nowrap">Texts here</div><div class="a gr" style="left:143.0px;top:53.0px;width:32.0px;height:15.9px;border-radius:2.5px;color:#fff;font-size:5.5px;line-height:1.05;display:flex;align-items:center;justify-content:center;text-align:center;white-space:nowrap">Texts here</div><div class="a gr" style="left:143.0px;top:81.2px;width:32.0px;height:15.8px;border-radius:2.5px;color:#fff;font-size:5.5px;line-height:1.05;display:flex;align-items:center;justify-content:center;text-align:center;white-space:nowrap">Texts here</div><div class="a gr" style="left:143.0px;top:126.3px;width:32.0px;height:15.6px;border-radius:2.5px;color:#fff;font-size:5.5px;line-height:1.05;display:flex;align-items:center;justify-content:center;text-align:center;white-space:nowrap">Texts here</div><div class="a gr" style="left:143.0px;top:144.4px;width:32.0px;height:16.8px;border-radius:2.5px;color:#fff;font-size:5.5px;line-height:1.05;display:flex;align-items:center;justify-content:center;text-align:center;white-space:nowrap">Texts here</div><div class="a db" style="left:188.0px;top:53.0px;width:31.9px;height:15.9px;border-radius:2.5px;color:#fff;font-size:5.5px;line-height:1.05;display:flex;align-items:center;justify-content:center;text-align:center;white-space:nowrap">Texts here</div><div class="a db" style="left:188.0px;top:71.5px;width:31.9px;height:15.5px;border-radius:2.5px;color:#fff;font-size:5.5px;line-height:1.05;display:flex;align-items:center;justify-content:center;text-align:center;white-space:nowrap">Texts here</div><div class="a db" style="left:188.0px;top:90.4px;width:31.9px;height:15.4px;border-radius:2.5px;color:#fff;font-size:5.5px;line-height:1.05;display:flex;align-items:center;justify-content:center;text-align:center;white-space:nowrap">Texts here</div><div class="a db" style="left:188.0px;top:108.4px;width:31.9px;height:15.4px;border-radius:2.5px;color:#fff;font-size:5.5px;line-height:1.05;display:flex;align-items:center;justify-content:center;text-align:center;white-space:nowrap">Texts here</div><div class="a db" style="left:188.0px;top:129.3px;width:31.9px;height:30.7px;border-radius:2.5px;color:#fff;font-size:5.5px;line-height:1.05;display:flex;align-items:center;justify-content:center;text-align:center;white-space:nowrap">Texts here</div><div class="a gy" style="left:233.0px;top:53.0px;width:31.8px;height:15.9px;border-radius:2.5px;color:#fff;font-size:5.5px;line-height:1.05;display:flex;align-items:center;justify-content:center;text-align:center;white-space:nowrap">Texts here</div><div class="a gy" style="left:233.0px;top:71.5px;width:31.8px;height:15.5px;border-radius:2.5px;color:#fff;font-size:5.5px;line-height:1.05;display:flex;align-items:center;justify-content:center;text-align:center;white-space:nowrap">Texts here</div><div class="a gy" style="left:233.0px;top:108.4px;width:31.8px;height:15.4px;border-radius:2.5px;color:#fff;font-size:5.5px;line-height:1.05;display:flex;align-items:center;justify-content:center;text-align:center;white-space:nowrap">Texts here</div><div class="a gy" style="left:233.0px;top:127.6px;width:31.8px;height:15.4px;border-radius:2.5px;color:#fff;font-size:5.5px;line-height:1.05;display:flex;align-items:center;justify-content:center;text-align:center;white-space:nowrap">Texts here</div><div class="a gy" style="left:233.0px;top:145.6px;width:31.8px;height:15.6px;border-radius:2.5px;color:#fff;font-size:5.5px;line-height:1.05;display:flex;align-items:center;justify-content:center;text-align:center;white-space:nowrap">Texts here</div><!--T1END-->
</div>
<!-- thumbnail 2 -->
<div class="a" style="left:41px;top:488px;width:320px;height:182px;border:3px solid #c43e1c;border-radius:7px"></div>
<div class="a thumb" style="left:44px;top:491px">
<div class="a" style="left:0;top:0;width:1388px;height:781px;transform:scale(0.22622,0.2266);transform-origin:0 0">
<div class="a slidebg" style="left:0;top:0;width:1388px;height:781px"></div>
<!--S2BEGIN--><svg class="a" style="left:0;top:0" width="1388" height="200"><defs><linearGradient id="tg0" gradientUnits="userSpaceOnUse" x1="0" y1="-144.2" x2="0" y2="636.8"><stop offset="0" stop-color="#bdbdbd"/><stop offset=".12" stop-color="#d0d0d0"/><stop offset=".25" stop-color="#e8e8e8"/><stop offset=".35" stop-color="#f6f6f6"/></linearGradient></defs><text x="0" y="0" transform="translate(337 144.2) scale(0.966 1)" font-family="Liberation Sans" font-size="80" fill="#111" >Organizational Chart</text></svg><svg class="a" style="left:0;top:0" width="1388" height="781"><path d="M735 258 L735 271.5" fill="none" stroke="#747474" stroke-width="4"/><path d="M471 286 L471 271.5 L998 271.5 L998 286" fill="none" stroke="#747474" stroke-width="4"/><path d="M472 349 L472 363.5" fill="none" stroke="#747474" stroke-width="4"/><path d="M338 377 L338 363.5 L606 363.5 L606 377" fill="none" stroke="#747474" stroke-width="4"/><path d="M998 349 L998 363.5 L919 363.5 L919 377" fill="none" stroke="#747474" stroke-width="4"/><path d="M998 363.5 L1076 363.5 L1076 377" fill="none" stroke="#8a8a8a" stroke-width="1.6"/><path d="M606 442 L606 455.5" fill="none" stroke="#8a8a8a" stroke-width="1.6"/><path d="M528 469 L528 455.5 L685 455.5 L685 469" fill="none" stroke="#8a8a8a" stroke-width="1.6"/><path d="M919 441 L919 455.5" fill="none" stroke="#8a8a8a" stroke-width="1.6"/><path d="M841 469 L841 455.5 L998 455.5 L998 469" fill="none" stroke="#8a8a8a" stroke-width="1.6"/><path d="M287 441 L287 593.5 L307 593.5" fill="none" stroke="#8a8a8a" stroke-width="1.6"/><path d="M287 501.5 L307 501.5" fill="none" stroke="#8a8a8a" stroke-width="1.6"/><path d="M476 534 L476 593.5 L495 593.5" fill="none" stroke="#8a8a8a" stroke-width="1.6"/><path d="M789 534 L789 593.5 L809 593.5" fill="none" stroke="#8a8a8a" stroke-width="1.6"/><path d="M946 534 L946 685.5 L965 685.5" fill="none" stroke="#8a8a8a" stroke-width="1.6"/><path d="M946 593.5 L965 593.5" fill="none" stroke="#8a8a8a" stroke-width="1.6"/><ellipse cx="735" cy="259" rx="4" ry="3" fill="#6a6a6a"/><ellipse cx="471" cy="285" rx="4" ry="3" fill="#6a6a6a"/><ellipse cx="998" cy="285" rx="4" ry="3" fill="#6a6a6a"/><ellipse cx="472" cy="350" rx="4" ry="3" fill="#6a6a6a"/><ellipse cx="338" cy="376" rx="4" ry="3" fill="#6a6a6a"/><ellipse cx="606" cy="376" rx="4" ry="3" fill="#6a6a6a"/><ellipse cx="998" cy="350" rx="4" ry="3" fill="#6a6a6a"/><ellipse cx="919" cy="376" rx="4" ry="3" fill="#6a6a6a"/><ellipse cx="1076" cy="376" rx="4" ry="3" fill="#6a6a6a"/><ellipse cx="287" cy="442" rx="4" ry="3" fill="#6a6a6a"/><ellipse cx="606" cy="443" rx="4" ry="3" fill="#6a6a6a"/><ellipse cx="528" cy="468" rx="4" ry="3" fill="#6a6a6a"/><ellipse cx="685" cy="468" rx="4" ry="3" fill="#6a6a6a"/><ellipse cx="919" cy="442" rx="4" ry="3" fill="#6a6a6a"/><ellipse cx="841" cy="468" rx="4" ry="3" fill="#6a6a6a"/><ellipse cx="998" cy="468" rx="4" ry="3" fill="#6a6a6a"/><ellipse cx="476" cy="535" rx="4" ry="3" fill="#6a6a6a"/><ellipse cx="789" cy="535" rx="4" ry="3" fill="#6a6a6a"/><ellipse cx="946" cy="535" rx="4" ry="3" fill="#6a6a6a"/><ellipse cx="307" cy="501.5" rx="3" ry="4" fill="#6a6a6a"/><ellipse cx="307" cy="593.5" rx="3" ry="4" fill="#6a6a6a"/><ellipse cx="495" cy="593.5" rx="3" ry="4" fill="#6a6a6a"/><ellipse cx="809" cy="593.5" rx="3" ry="4" fill="#6a6a6a"/><ellipse cx="965" cy="593.5" rx="3" ry="4" fill="#6a6a6a"/><ellipse cx="965" cy="685.5" rx="3" ry="4" fill="#6a6a6a"/></svg><div class="bx or" style="left:670px;top:194px;width:130px;height:64px;font-size:25.7px">Texts here</div><div class="bx lb" style="left:408px;top:286px;width:129px;height:63px;font-size:25.7px">Texts here</div><div class="bx lb" style="left:933px;top:286px;width:129px;height:63px;font-size:25.7px">Texts here</div><div class="bx gr" style="left:274px;top:377px;width:130px;height:64px;font-size:25.7px">Texts here</div><div class="bx gr" style="left:540px;top:377px;width:131px;height:65px;font-size:25.7px">Texts here</div><div class="bx gr" style="left:855px;top:377px;width:129px;height:64px;font-size:25.7px">Texts here</div><div class="bx gr" style="left:1011px;top:377px;width:130px;height:64px;font-size:25.7px">Texts here</div><div class="bx db" style="left:307px;top:469px;width:129px;height:65px;font-size:27px">Texts here</div><div class="bx db" style="left:463px;top:469px;width:129px;height:65px;font-size:27px">Texts here</div><div class="bx db" style="left:620px;top:469px;width:129px;height:65px;font-size:27px">Texts here</div><div class="bx db" style="left:776px;top:469px;width:130px;height:65px;font-size:27px">Texts here</div><div class="bx db" style="left:933px;top:469px;width:129px;height:65px;font-size:27px">Texts here</div><div class="bx gy" style="left:307px;top:561px;width:129px;height:65px;font-size:27px">Texts here</div><div class="bx gy" style="left:495px;top:561px;width:130px;height:65px;font-size:27px">Texts here</div><div class="bx gy" style="left:809px;top:561px;width:129px;height:65px;font-size:27px">Texts here</div><div class="bx gy" style="left:965px;top:561px;width:130px;height:65px;font-size:27px">Texts here</div><div class="bx gy" style="left:965px;top:653px;width:130px;height:65px;font-size:27px">Texts here</div><!--S2END-->
</div>
</div>
<!-- thumbnail 3 -->
<div class="a thumb" style="left:44px;top:694px">
<!--T3BEGIN--><div class="a slidebg" style="left:0;top:0;width:314px;height:178px"></div><div class="t" style="left:77px;top:18.5px;font-size:17px;color:#1a1a1a">Organizational Chart</div><svg class="a" style="left:0;top:0" width="314" height="178"><path d="M173.0 62.0 L173.0 66.5" fill="none" stroke="#6a6a6a" stroke-width="0.9"/><path d="M108.0 69.4 L108.0 66.5 L238.0 66.5 L238.0 69.4" fill="none" stroke="#6a6a6a" stroke-width="0.9"/><path d="M107.5 86.9 L107.5 91.4" fill="none" stroke="#6a6a6a" stroke-width="0.9"/><path d="M73.2 94.2 L73.2 91.4 L143.7 91.4 L143.7 94.2" fill="none" stroke="#6a6a6a" stroke-width="0.9"/><path d="M72.4 112.2 L72.4 116.6" fill="none" stroke="#6a6a6a" stroke-width="0.9"/><path d="M55.2 119.5 L55.2 116.6 L90.6 116.6 L90.6 119.5" fill="none" stroke="#6a6a6a" stroke-width="0.9"/><path d="M142.5 112.2 L142.5 116.6" fill="none" stroke="#6a6a6a" stroke-width="0.9"/><path d="M125.4 119.5 L125.4 116.6 L159.6 116.6 L159.6 119.5" fill="none" stroke="#6a6a6a" stroke-width="0.9"/><path d="M125.0 137.1 L125.0 144.5" fill="none" stroke="#6a6a6a" stroke-width="0.9"/><path d="M194.0 137.1 L194.0 144.5" fill="none" stroke="#6a6a6a" stroke-width="0.9"/><path d="M194.0 116.6 L194.0 119.5" fill="none" stroke="#6a6a6a" stroke-width="0.9"/><path d="M194.0 116.6 L214.0 116.6" fill="none" stroke="#6a6a6a" stroke-width="0.9"/></svg><div class="a or" style="left:160.0px;top:44.1px;width:25.8px;height:18.0px;border-radius:2.5px;color:#fff;font-size:5.3px;line-height:1.05;display:flex;align-items:center;justify-content:center;text-align:center;white-space:nowrap">Texts<br>here</div><div class="a lb" style="left:93.9px;top:69.4px;width:27.1px;height:17.5px;border-radius:2.5px;color:#fff;font-size:5.3px;line-height:1.05;display:flex;align-items:center;justify-content:center;text-align:center;white-space:nowrap">Texts<br>here</div><div class="a gr" style="left:59.1px;top:94.2px;width:26.6px;height:18.0px;border-radius:2.5px;color:#fff;font-size:5.3px;line-height:1.05;display:flex;align-items:center;justify-content:center;text-align:center;white-space:nowrap">Texts<br>here</div><div class="a gr" style="left:129.0px;top:94.2px;width:26.9px;height:18.0px;border-radius:2.5px;color:#fff;font-size:5.3px;line-height:1.05;display:flex;align-items:center;justify-content:center;text-align:center;white-space:nowrap">Texts<br>here</div><div class="a db" style="left:42.2px;top:119.5px;width:26.7px;height:17.6px;border-radius:2.5px;color:#fff;font-size:5.3px;line-height:1.05;display:flex;align-items:center;justify-content:center;text-align:center;white-space:nowrap">Texts<br>here</div><div class="a gy" style="left:77.1px;top:119.5px;width:26.7px;height:17.6px;border-radius:2.5px;color:#fff;font-size:5.3px;line-height:1.05;display:flex;align-items:center;justify-content:center;text-align:center;white-space:nowrap">Texts<br>here</div><div class="a db" style="left:112.0px;top:119.5px;width:26.0px;height:17.6px;border-radius:2.5px;color:#fff;font-size:5.3px;line-height:1.05;display:flex;align-items:center;justify-content:center;text-align:center;white-space:nowrap">Texts<br>here</div><div class="a db" style="left:147.0px;top:119.5px;width:26.0px;height:17.6px;border-radius:2.5px;color:#fff;font-size:5.3px;line-height:1.05;display:flex;align-items:center;justify-content:center;text-align:center;white-space:nowrap">Texts<br>here</div><div class="a db" style="left:180.9px;top:119.5px;width:26.1px;height:17.6px;border-radius:2.5px;color:#fff;font-size:5.3px;line-height:1.05;display:flex;align-items:center;justify-content:center;text-align:center;white-space:nowrap">Texts<br>here</div><div class="a gy" style="left:112.0px;top:144.5px;width:26.0px;height:17.6px;border-radius:2.5px;color:#fff;font-size:5.3px;line-height:1.05;display:flex;align-items:center;justify-content:center;text-align:center;white-space:nowrap">Texts<br>here</div><div class="a gy" style="left:180.9px;top:144.5px;width:26.1px;height:17.6px;border-radius:2.5px;color:#fff;font-size:5.3px;line-height:1.05;display:flex;align-items:center;justify-content:center;text-align:center;white-space:nowrap">Texts<br>here</div><!--T3END-->
</div>
<!-- thumbnail 4 -->
<div class="a thumb" style="left:44px;top:897px">
<!--T4BEGIN--><div class="a slidebg" style="left:0;top:0;width:314px;height:178px"></div><div class="a" style="left:40px;top:17px;width:234px;height:29px;background:#575757"></div><div class="t" style="left:58px;top:25px;font-size:9px;font-style:italic;color:#fff;letter-spacing:-0.5px">Slide</div><div class="a" style="left:79px;top:23px;width:34px;height:15px;background:#c4401a;border-radius:7px"></div><div class="t" style="left:81.5px;top:27px;font-size:6.5px;font-weight:bold;color:#fff">HUNTER</div><div class="t" style="left:58px;top:59px;font-size:12px;color:#111">Thank you!</div><div class="a" style="left:58px;top:83px;width:170px;height:1.6px;background:#d2cccc"></div><div class="a" style="left:58px;top:97px;width:126px;height:1.6px;background:#d2cccc"></div><div class="a" style="left:58px;top:105px;width:170px;height:1.6px;background:#d2cccc"></div><div class="a" style="left:58px;top:120px;width:46px;height:1.6px;background:#8090d8"></div><div class="a" style="left:181px;top:122.5px;width:22px;height:8.5px;background:#333"></div><div class="a" style="left:182.5px;top:124px;width:5px;height:5px;background:#4a8ad0"></div><div class="a" style="left:58px;top:134px;width:200px;height:1.3px;background:#333"></div><div class="a" style="left:58px;top:141px;width:77px;height:17px;background:#9a9a9a;color:#fff;font-size:5px;display:flex;align-items:center;justify-content:center">Download Free Templates</div><div class="a" style="left:180px;top:141px;width:77px;height:17px;background:linear-gradient(#8a8a8a,#2a2a2a 35%,#111);color:#fff;font-size:5px;display:flex;align-items:center;justify-content:center">Upload to Slide Online.com</div><div class="a" style="left:58px;top:158px;width:77px;height:8px;background:linear-gradient(rgba(150,150,150,.5),rgba(200,200,200,0))"></div><div class="a" style="left:180px;top:158px;width:77px;height:8px;background:linear-gradient(rgba(60,60,60,.5),rgba(200,200,200,0))"></div><!--T4END-->
</div>

<!-- horizontal ruler -->
<div class="a" style="left:467px;top:269px;width:1387px;height:17px;background:#fff;border:1px solid #e6e6e6"></div>
<!--HRBEGIN--><div class="a" style="left:470.0px;top:276px;width:1px;height:2px;background:#808080"></div><div class="a" style="left:483.0px;top:274px;width:1px;height:7px;background:#777"></div><div class="a" style="left:496.0px;top:276px;width:1px;height:2px;background:#808080"></div><div class="a" style="left:509.0px;top:276px;width:1px;height:2px;background:#808080"></div><div class="a" style="left:522.0px;top:276px;width:1px;height:2px;background:#808080"></div><div class="t" style="left:535.0px;top:272px;font-size:11.5px;color:#555;width:14px;text-align:center;margin-left:-7px">6</div><div class="a" style="left:548.0px;top:276px;width:1px;height:2px;background:#808080"></div><div class="a" style="left:561.0px;top:276px;width:1px;height:2px;background:#808080"></div><div class="a" style="left:574.0px;top:276px;width:1px;height:2px;background:#808080"></div><div class="a" style="left:587.0px;top:274px;width:1px;height:7px;background:#777"></div><div class="a" style="left:600.0px;top:276px;width:1px;height:2px;background:#808080"></div><div class="a" style="left:613.0px;top:276px;width:1px;height:2px;background:#808080"></div><div class="a" style="left:626.0px;top:276px;width:1px;height:2px;background:#808080"></div><div class="t" style="left:639.0px;top:272px;font-size:11.5px;color:#555;width:14px;text-align:center;margin-left:-7px">5</div><div class="a" style="left:652.0px;top:276px;width:1px;height:2px;background:#808080"></div><div class="a" style="left:665.0px;top:276px;width:1px;height:2px;background:#808080"></div><div class="a" style="left:678.0px;top:276px;width:1px;height:2px;background:#808080"></div><div class="a" style="left:691.0px;top:274px;width:1px;height:7px;background:#777"></div><div class="a" style="left:704.0px;top:276px;width:1px;height:2px;background:#808080"></div><div class="a" style="left:717.0px;top:276px;width:1px;height:2px;background:#808080"></div><div class="a" style="left:730.0px;top:276px;width:1px;height:2px;background:#808080"></div><div class="t" style="left:743.0px;top:272px;font-size:11.5px;color:#555;width:14px;text-align:center;margin-left:-7px">4</div><div class="a" style="left:756.0px;top:276px;width:1px;height:2px;background:#808080"></div><div class="a" style="left:769.0px;top:276px;width:1px;height:2px;background:#808080"></div><div class="a" style="left:782.0px;top:276px;width:1px;height:2px;background:#808080"></div><div class="a" style="left:795.0px;top:274px;width:1px;height:7px;background:#777"></div><div class="a" style="left:808.0px;top:276px;width:1px;height:2px;background:#808080"></div><div class="a" style="left:821.0px;top:276px;width:1px;height:2px;background:#808080"></div><div class="a" style="left:834.0px;top:276px;width:1px;height:2px;background:#808080"></div><div class="t" style="left:847.0px;top:272px;font-size:11.5px;color:#555;width:14px;text-align:center;margin-left:-7px">3</div><div class="a" style="left:860.0px;top:276px;width:1px;height:2px;background:#808080"></div><div class="a" style="left:873.0px;top:276px;width:1px;height:2px;background:#808080"></div><div class="a" style="left:886.0px;top:276px;width:1px;height:2px;background:#808080"></div><div class="a" style="left:899.0px;top:274px;width:1px;height:7px;background:#777"></div><div class="a" style="left:912.0px;top:276px;width:1px;height:2px;background:#808080"></div><div class="a" style="left:925.0px;top:276px;width:1px;height:2px;background:#808080"></div><div class="a" style="left:938.0px;top:276px;width:1px;height:2px;background:#808080"></div><div class="t" style="left:951.0px;top:272px;font-size:11.5px;color:#555;width:14px;text-align:center;margin-left:-7px">2</div><div class="a" style="left:964.0px;top:276px;width:1px;height:2px;background:#808080"></div><div class="a" style="left:977.0px;top:276px;width:1px;height:2px;background:#808080"></div><div class="a" style="left:990.0px;top:276px;width:1px;height:2px;background:#808080"></div><div class="a" style="left:1003.0px;top:274px;width:1px;height:7px;background:#777"></div><div class="a" style="left:1016.0px;top:276px;width:1px;height:2px;background:#808080"></div><div class="a" style="left:1029.0px;top:276px;width:1px;height:2px;background:#808080"></div><div class="a" style="left:1042.0px;top:276px;width:1px;height:2px;background:#808080"></div><div class="t" style="left:1055.0px;top:272px;font-size:11.5px;color:#555;width:14px;text-align:center;margin-left:-7px">1</div><div class="a" style="left:1068.0px;top:276px;width:1px;height:2px;background:#808080"></div><div class="a" style="left:1081.0px;top:276px;width:1px;height:2px;background:#808080"></div><div class="a" style="left:1094.0px;top:276px;width:1px;height:2px;background:#808080"></div><div class="a" style="left:1107.0px;top:274px;width:1px;height:7px;background:#777"></div><div class="a" style="left:1120.0px;top:276px;width:1px;height:2px;background:#808080"></div><div class="a" style="left:1133.0px;top:276px;width:1px;height:2px;background:#808080"></div><div class="a" style="left:1146.0px;top:276px;width:1px;height:2px;background:#808080"></div><div class="t" style="left:1159.0px;top:272px;font-size:11.5px;color:#555;width:14px;text-align:center;margin-left:-7px">0</div><div class="a" style="left:1172.0px;top:276px;width:1px;height:2px;background:#808080"></div><div class="a" style="left:1185.0px;top:276px;width:1px;height:2px;background:#808080"></div><div class="a" style="left:1198.0px;top:276px;width:1px;height:2px;background:#808080"></div><div class="a" style="left:1211.0px;top:274px;width:1px;height:7px;background:#777"></div><div class="a" style="left:1224.0px;top:276px;width:1px;height:2px;background:#808080"></div><div class="a" style="left:1237.0px;top:276px;width:1px;height:2px;background:#808080"></div><div class="a" style="left:1250.0px;top:276px;width:1px;height:2px;background:#808080"></div><div class="t" style="left:1263.0px;top:272px;font-size:11.5px;color:#555;width:14px;text-align:center;margin-left:-7px">1</div><div class="a" style="left:1276.0px;top:276px;width:1px;height:2px;background:#808080"></div><div class="a" style="left:1289.0px;top:276px;width:1px;height:2px;background:#808080"></div><div class="a" style="left:1302.0px;top:276px;width:1px;height:2px;background:#808080"></div><div class="a" style="left:1315.0px;top:274px;width:1px;height:7px;background:#777"></div><div class="a" style="left:1328.0px;top:276px;width:1px;height:2px;background:#808080"></div><div class="a" style="left:1341.0px;top:276px;width:1px;height:2px;background:#808080"></div><div class="a" style="left:1354.0px;top:276px;width:1px;height:2px;background:#808080"></div><div class="t" style="left:1367.0px;top:272px;font-size:11.5px;color:#555;width:14px;text-align:center;margin-left:-7px">2</div><div class="a" style="left:1380.0px;top:276px;width:1px;height:2px;background:#808080"></div><div class="a" style="left:1393.0px;top:276px;width:1px;height:2px;background:#808080"></div><div class="a" style="left:1406.0px;top:276px;width:1px;height:2px;background:#808080"></div><div class="a" style="left:1419.0px;top:274px;width:1px;height:7px;background:#777"></div><div class="a" style="left:1432.0px;top:276px;width:1px;height:2px;background:#808080"></div><div class="a" style="left:1445.0px;top:276px;width:1px;height:2px;background:#808080"></div><div class="a" style="left:1458.0px;top:276px;width:1px;height:2px;background:#808080"></div><div class="t" style="left:1471.0px;top:272px;font-size:11.5px;color:#555;width:14px;text-align:center;margin-left:-7px">3</div><div class="a" style="left:1484.0px;top:276px;width:1px;height:2px;background:#808080"></div><div class="a" style="left:1497.0px;top:276px;width:1px;height:2px;background:#808080"></div><div class="a" style="left:1510.0px;top:276px;width:1px;height:2px;background:#808080"></div><div class="a" style="left:1523.0px;top:274px;width:1px;height:7px;background:#777"></div><div class="a" style="left:1536.0px;top:276px;width:1px;height:2px;background:#808080"></div><div class="a" style="left:1549.0px;top:276px;width:1px;height:2px;background:#808080"></div><div class="a" style="left:1562.0px;top:276px;width:1px;height:2px;background:#808080"></div><div class="t" style="left:1575.0px;top:272px;font-size:11.5px;color:#555;width:14px;text-align:center;margin-left:-7px">4</div><div class="a" style="left:1588.0px;top:276px;width:1px;height:2px;background:#808080"></div><div class="a" style="left:1601.0px;top:276px;width:1px;height:2px;background:#808080"></div><div class="a" style="left:1614.0px;top:276px;width:1px;height:2px;background:#808080"></div><div class="a" style="left:1627.0px;top:274px;width:1px;height:7px;background:#777"></div><div class="a" style="left:1640.0px;top:276px;width:1px;height:2px;background:#808080"></div><div class="a" style="left:1653.0px;top:276px;width:1px;height:2px;background:#808080"></div><div class="a" style="left:1666.0px;top:276px;width:1px;height:2px;background:#808080"></div><div class="t" style="left:1679.0px;top:272px;font-size:11.5px;color:#555;width:14px;text-align:center;margin-left:-7px">5</div><div class="a" style="left:1692.0px;top:276px;width:1px;height:2px;background:#808080"></div><div class="a" style="left:1705.0px;top:276px;width:1px;height:2px;background:#808080"></div><div class="a" style="left:1718.0px;top:276px;width:1px;height:2px;background:#808080"></div><div class="a" style="left:1731.0px;top:274px;width:1px;height:7px;background:#777"></div><div class="a" style="left:1744.0px;top:276px;width:1px;height:2px;background:#808080"></div><div class="a" style="left:1757.0px;top:276px;width:1px;height:2px;background:#808080"></div><div class="a" style="left:1770.0px;top:276px;width:1px;height:2px;background:#808080"></div><div class="t" style="left:1783.0px;top:272px;font-size:11.5px;color:#555;width:14px;text-align:center;margin-left:-7px">6</div><div class="a" style="left:1796.0px;top:276px;width:1px;height:2px;background:#808080"></div><div class="a" style="left:1809.0px;top:276px;width:1px;height:2px;background:#808080"></div><div class="a" style="left:1822.0px;top:276px;width:1px;height:2px;background:#808080"></div><div class="a" style="left:1835.0px;top:274px;width:1px;height:7px;background:#777"></div><div class="a" style="left:1848.0px;top:276px;width:1px;height:2px;background:#808080"></div><!--HREND-->
<!-- vertical ruler -->
<div class="a" style="left:393px;top:312px;width:18px;height:778px;background:#fff;border:1px solid #e6e6e6"></div>
<!--VRBEGIN--><div class="a" style="left:401px;top:324.0px;width:2px;height:1px;background:#808080"></div><div class="a" style="left:399px;top:337.0px;width:7px;height:1px;background:#777"></div><div class="a" style="left:401px;top:350.0px;width:2px;height:1px;background:#808080"></div><div class="a" style="left:401px;top:363.0px;width:2px;height:1px;background:#808080"></div><div class="a" style="left:401px;top:376.0px;width:2px;height:1px;background:#808080"></div><div class="t" style="left:396px;top:389.0px;font-size:11.5px;color:#555;width:12px;height:12px;text-align:center;margin-top:-6px;transform:rotate(-90deg)">3</div><div class="a" style="left:401px;top:402.0px;width:2px;height:1px;background:#808080"></div><div class="a" style="left:401px;top:415.0px;width:2px;height:1px;background:#808080"></div><div class="a" style="left:401px;top:428.0px;width:2px;height:1px;background:#808080"></div><div class="a" style="left:399px;top:441.0px;width:7px;height:1px;background:#777"></div><div class="a" style="left:401px;top:454.0px;width:2px;height:1px;background:#808080"></div><div class="a" style="left:401px;top:467.0px;width:2px;height:1px;background:#808080"></div><div class="a" style="left:401px;top:480.0px;width:2px;height:1px;background:#808080"></div><div class="t" style="left:396px;top:493.0px;font-size:11.5px;color:#555;width:12px;height:12px;text-align:center;margin-top:-6px;transform:rotate(-90deg)">2</div><div class="a" style="left:401px;top:506.0px;width:2px;height:1px;background:#808080"></div><div class="a" style="left:401px;top:519.0px;width:2px;height:1px;background:#808080"></div><div class="a" style="left:401px;top:532.0px;width:2px;height:1px;background:#808080"></div><div class="a" style="left:399px;top:545.0px;width:7px;height:1px;background:#777"></div><div class="a" style="left:401px;top:558.0px;width:2px;height:1px;background:#808080"></div><div class="a" style="left:401px;top:571.0px;width:2px;height:1px;background:#808080"></div><div class="a" style="left:401px;top:584.0px;width:2px;height:1px;background:#808080"></div><div class="t" style="left:396px;top:597.0px;font-size:11.5px;color:#555;width:12px;height:12px;text-align:center;margin-top:-6px;transform:rotate(-90deg)">1</div><div class="a" style="left:401px;top:610.0px;width:2px;height:1px;background:#808080"></div><div class="a" style="left:401px;top:623.0px;width:2px;height:1px;background:#808080"></div><div class="a" style="left:401px;top:636.0px;width:2px;height:1px;background:#808080"></div><div class="a" style="left:399px;top:649.0px;width:7px;height:1px;background:#777"></div><div class="a" style="left:401px;top:662.0px;width:2px;height:1px;background:#808080"></div><div class="a" style="left:401px;top:675.0px;width:2px;height:1px;background:#808080"></div><div class="a" style="left:401px;top:688.0px;width:2px;height:1px;background:#808080"></div><div class="t" style="left:396px;top:701.0px;font-size:11.5px;color:#555;width:12px;height:12px;text-align:center;margin-top:-6px;transform:rotate(-90deg)">0</div><div class="a" style="left:401px;top:714.0px;width:2px;height:1px;background:#808080"></div><div class="a" style="left:401px;top:727.0px;width:2px;height:1px;background:#808080"></div><div class="a" style="left:401px;top:740.0px;width:2px;height:1px;background:#808080"></div><div class="a" style="left:399px;top:753.0px;width:7px;height:1px;background:#777"></div><div class="a" style="left:401px;top:766.0px;width:2px;height:1px;background:#808080"></div><div class="a" style="left:401px;top:779.0px;width:2px;height:1px;background:#808080"></div><div class="a" style="left:401px;top:792.0px;width:2px;height:1px;background:#808080"></div><div class="t" style="left:396px;top:805.0px;font-size:11.5px;color:#555;width:12px;height:12px;text-align:center;margin-top:-6px;transform:rotate(-90deg)">1</div><div class="a" style="left:401px;top:818.0px;width:2px;height:1px;background:#808080"></div><div class="a" style="left:401px;top:831.0px;width:2px;height:1px;background:#808080"></div><div class="a" style="left:401px;top:844.0px;width:2px;height:1px;background:#808080"></div><div class="a" style="left:399px;top:857.0px;width:7px;height:1px;background:#777"></div><div class="a" style="left:401px;top:870.0px;width:2px;height:1px;background:#808080"></div><div class="a" style="left:401px;top:883.0px;width:2px;height:1px;background:#808080"></div><div class="a" style="left:401px;top:896.0px;width:2px;height:1px;background:#808080"></div><div class="t" style="left:396px;top:909.0px;font-size:11.5px;color:#555;width:12px;height:12px;text-align:center;margin-top:-6px;transform:rotate(-90deg)">2</div><div class="a" style="left:401px;top:922.0px;width:2px;height:1px;background:#808080"></div><div class="a" style="left:401px;top:935.0px;width:2px;height:1px;background:#808080"></div><div class="a" style="left:401px;top:948.0px;width:2px;height:1px;background:#808080"></div><div class="a" style="left:399px;top:961.0px;width:7px;height:1px;background:#777"></div><div class="a" style="left:401px;top:974.0px;width:2px;height:1px;background:#808080"></div><div class="a" style="left:401px;top:987.0px;width:2px;height:1px;background:#808080"></div><div class="a" style="left:401px;top:1000.0px;width:2px;height:1px;background:#808080"></div><div class="t" style="left:396px;top:1013.0px;font-size:11.5px;color:#555;width:12px;height:12px;text-align:center;margin-top:-6px;transform:rotate(-90deg)">3</div><div class="a" style="left:401px;top:1026.0px;width:2px;height:1px;background:#808080"></div><div class="a" style="left:401px;top:1039.0px;width:2px;height:1px;background:#808080"></div><div class="a" style="left:401px;top:1052.0px;width:2px;height:1px;background:#808080"></div><div class="a" style="left:399px;top:1065.0px;width:7px;height:1px;background:#777"></div><div class="a" style="left:401px;top:1078.0px;width:2px;height:1px;background:#808080"></div><!--VREND-->

<!-- SLIDE -->
<div class="a" id="slide" style="overflow:hidden">
<div class="a slidebg" style="left:0;top:0;width:1388px;height:781px"></div>
<!--S2MBEGIN--><svg class="a" style="left:0;top:0" width="1388" height="200"><defs><linearGradient id="tg" gradientUnits="userSpaceOnUse" x1="0" y1="-144.2" x2="0" y2="636.8"><stop offset="0" stop-color="#bdbdbd"/><stop offset=".12" stop-color="#d0d0d0"/><stop offset=".25" stop-color="#e8e8e8"/><stop offset=".35" stop-color="#f6f6f6"/></linearGradient></defs><text x="0" y="0" transform="translate(337 144.2) scale(0.966 1)" font-family="Liberation Sans" font-size="80" fill="#111" stroke="url(#tg)" stroke-width="2.2">Organizational Chart</text></svg><svg class="a" style="left:0;top:0" width="1388" height="781"><path d="M735 258 L735 271.5" fill="none" stroke="#747474" stroke-width="4"/><path d="M471 286 L471 271.5 L998 271.5 L998 286" fill="none" stroke="#747474" stroke-width="4"/><path d="M472 349 L472 363.5" fill="none" stroke="#747474" stroke-width="4"/><path d="M338 377 L338 363.5 L606 363.5 L606 377" fill="none" stroke="#747474" stroke-width="4"/><path d="M998 349 L998 363.5 L919 363.5 L919 377" fill="none" stroke="#747474" stroke-width="4"/><path d="M998 363.5 L1076 363.5 L1076 377" fill="none" stroke="#8a8a8a" stroke-width="1.6"/><path d="M606 442 L606 455.5" fill="none" stroke="#8a8a8a" stroke-width="1.6"/><path d="M528 469 L528 455.5 L685 455.5 L685 469" fill="none" stroke="#8a8a8a" stroke-width="1.6"/><path d="M919 441 L919 455.5" fill="none" stroke="#8a8a8a" stroke-width="1.6"/><path d="M841 469 L841 455.5 L998 455.5 L998 469" fill="none" stroke="#8a8a8a" stroke-width="1.6"/><path d="M287 441 L287 593.5 L307 593.5" fill="none" stroke="#8a8a8a" stroke-width="1.6"/><path d="M287 501.5 L307 501.5" fill="none" stroke="#8a8a8a" stroke-width="1.6"/><path d="M476 534 L476 593.5 L495 593.5" fill="none" stroke="#8a8a8a" stroke-width="1.6"/><path d="M789 534 L789 593.5 L809 593.5" fill="none" stroke="#8a8a8a" stroke-width="1.6"/><path d="M946 534 L946 685.5 L965 685.5" fill="none" stroke="#8a8a8a" stroke-width="1.6"/><path d="M946 593.5 L965 593.5" fill="none" stroke="#8a8a8a" stroke-width="1.6"/><ellipse cx="735" cy="259" rx="4" ry="3" fill="#6a6a6a"/><ellipse cx="471" cy="285" rx="4" ry="3" fill="#6a6a6a"/><ellipse cx="998" cy="285" rx="4" ry="3" fill="#6a6a6a"/><ellipse cx="472" cy="350" rx="4" ry="3" fill="#6a6a6a"/><ellipse cx="338" cy="376" rx="4" ry="3" fill="#6a6a6a"/><ellipse cx="606" cy="376" rx="4" ry="3" fill="#6a6a6a"/><ellipse cx="998" cy="350" rx="4" ry="3" fill="#6a6a6a"/><ellipse cx="919" cy="376" rx="4" ry="3" fill="#6a6a6a"/><ellipse cx="1076" cy="376" rx="4" ry="3" fill="#6a6a6a"/><ellipse cx="287" cy="442" rx="4" ry="3" fill="#6a6a6a"/><ellipse cx="606" cy="443" rx="4" ry="3" fill="#6a6a6a"/><ellipse cx="528" cy="468" rx="4" ry="3" fill="#6a6a6a"/><ellipse cx="685" cy="468" rx="4" ry="3" fill="#6a6a6a"/><ellipse cx="919" cy="442" rx="4" ry="3" fill="#6a6a6a"/><ellipse cx="841" cy="468" rx="4" ry="3" fill="#6a6a6a"/><ellipse cx="998" cy="468" rx="4" ry="3" fill="#6a6a6a"/><ellipse cx="476" cy="535" rx="4" ry="3" fill="#6a6a6a"/><ellipse cx="789" cy="535" rx="4" ry="3" fill="#6a6a6a"/><ellipse cx="946" cy="535" rx="4" ry="3" fill="#6a6a6a"/><ellipse cx="307" cy="501.5" rx="3" ry="4" fill="#6a6a6a"/><ellipse cx="307" cy="593.5" rx="3" ry="4" fill="#6a6a6a"/><ellipse cx="495" cy="593.5" rx="3" ry="4" fill="#6a6a6a"/><ellipse cx="809" cy="593.5" rx="3" ry="4" fill="#6a6a6a"/><ellipse cx="965" cy="593.5" rx="3" ry="4" fill="#6a6a6a"/><ellipse cx="965" cy="685.5" rx="3" ry="4" fill="#6a6a6a"/></svg><div class="bx or" style="left:670px;top:194px;width:130px;height:64px;font-size:25.7px">Texts here</div><div class="bx lb" style="left:408px;top:286px;width:129px;height:63px;font-size:25.7px">Texts here</div><div class="bx lb" style="left:933px;top:286px;width:129px;height:63px;font-size:25.7px">Texts here</div><div class="bx gr" style="left:274px;top:377px;width:130px;height:64px;font-size:25.7px">Texts here</div><div class="bx gr" style="left:540px;top:377px;width:131px;height:65px;font-size:25.7px">Texts here</div><div class="bx gr" style="left:855px;top:377px;width:129px;height:64px;font-size:25.7px">Texts here</div><div class="bx gr" style="left:1011px;top:377px;width:130px;height:64px;font-size:25.7px">Texts here</div><div class="bx db" style="left:307px;top:469px;width:129px;height:65px;font-size:27px">Texts here</div><div class="bx db" style="left:463px;top:469px;width:129px;height:65px;font-size:27px">Texts here</div><div class="bx db" style="left:620px;top:469px;width:129px;height:65px;font-size:27px">Texts here</div><div class="bx db" style="left:776px;top:469px;width:130px;height:65px;font-size:27px">Texts here</div><div class="bx db" style="left:933px;top:469px;width:129px;height:65px;font-size:27px">Texts here</div><div class="bx gy" style="left:307px;top:561px;width:129px;height:65px;font-size:27px">Texts here</div><div class="bx gy" style="left:495px;top:561px;width:130px;height:65px;font-size:27px">Texts here</div><div class="bx gy" style="left:809px;top:561px;width:129px;height:65px;font-size:27px">Texts here</div><div class="bx gy" style="left:965px;top:561px;width:130px;height:65px;font-size:27px">Texts here</div><div class="bx gy" style="left:965px;top:653px;width:130px;height:65px;font-size:27px">Texts here</div><!--S2MEND-->
<!--SELBEGIN--><svg class="a" style="left:0;top:0" width="1388" height="781"><rect x="96.5" y="193.5" width="1222.0" height="525.0" fill="none" stroke="#5f5f5f" stroke-width="1.3"/><rect x="540.5" y="377.5" width="131.0" height="64.5" fill="none" stroke="#444" stroke-width="1.2"/><path d="M607 347V377" stroke="#5f5f5f" stroke-width="1.3"/><path d="M613.8 344.9 A12 12 0 1 1 619 333 L625.7 332.5 L615.6 342 L606.3 332.5 L614.8 333.5 A8 8 0 1 0 610.6 342.1 Z" fill="#fdfdfd" stroke="#555" stroke-width="2" stroke-linejoin="miter"/><circle cx="96.5" cy="193.5" r="6" fill="#fff" stroke="#5a5a5a" stroke-width="2.3"/><circle cx="708" cy="193.5" r="6" fill="#fff" stroke="#5a5a5a" stroke-width="2.3"/><circle cx="1318.5" cy="193.5" r="6" fill="#fff" stroke="#5a5a5a" stroke-width="2.3"/><circle cx="96.5" cy="457" r="6" fill="#fff" stroke="#5a5a5a" stroke-width="2.3"/><circle cx="1318.5" cy="457" r="6" fill="#fff" stroke="#5a5a5a" stroke-width="2.3"/><circle cx="96.5" cy="718.5" r="6" fill="#fff" stroke="#5a5a5a" stroke-width="2.3"/><circle cx="708" cy="718.5" r="6" fill="#fff" stroke="#5a5a5a" stroke-width="2.3"/><circle cx="1318.5" cy="718.5" r="6" fill="#fff" stroke="#5a5a5a" stroke-width="2.3"/><circle cx="540.5" cy="377.5" r="6" fill="#fff" stroke="#5a5a5a" stroke-width="2.3"/><circle cx="607" cy="377.5" r="6" fill="#fff" stroke="#5a5a5a" stroke-width="2.3"/><circle cx="671.5" cy="377.5" r="6" fill="#fff" stroke="#5a5a5a" stroke-width="2.3"/><circle cx="540.5" cy="409.5" r="6" fill="#fff" stroke="#5a5a5a" stroke-width="2.3"/><circle cx="671.5" cy="409.5" r="6" fill="#fff" stroke="#5a5a5a" stroke-width="2.3"/><circle cx="540.5" cy="442.5" r="6" fill="#fff" stroke="#5a5a5a" stroke-width="2.3"/><circle cx="607" cy="442.5" r="6" fill="#fff" stroke="#5a5a5a" stroke-width="2.3"/><circle cx="671.5" cy="442.5" r="6" fill="#fff" stroke="#5a5a5a" stroke-width="2.3"/></svg><!--SELEND-->
</div>
<!-- expand tab -->
<div class="a" style="left:551px;top:752px;width:19px;height:28px;background:#fafafa;border:1px solid #d4d4d4;border-left:none"></div>
<svg class="a" style="left:556px;top:760px" width="8" height="12"><path d="M1.5 1.5l4.5 4.5-4.5 4.5" fill="none" stroke="#909090" stroke-width="1.2"/></svg>

<!-- TEXT PANE -->
<div class="a" style="left:242px;top:496px;width:311px;height:539px;background:#efeff4;border:1px solid #c9c9d0;border-radius:4px;box-shadow:1px 1px 4px rgba(0,0,0,.2)"></div>
<div class="t" style="left:247px;top:507px;font-size:14.8px;font-weight:bold;color:#1f4e98">Type your text here</div>
<svg class="a" style="left:528px;top:509px" width="13" height="13"><path d="M1 1l11 11M12 1L1 12" stroke="#555" stroke-width="1.3"/></svg>
<div class="a" style="left:253px;top:535px;width:288px;height:360px;background:#fff;border:1px solid #a9a9a9"></div>
<div class="a" style="left:254px;top:536px;width:13px;height:358px;background:#ebebeb"></div>
<div class="a" style="left:254px;top:686px;width:265px;height:31px;background:#fffdf6;border:1px solid #f2c56f"></div>
<div class="a" style="left:520px;top:536px;width:20px;height:340px;background:#f0f0f0"></div>
<svg class="a" style="left:523px;top:540px" width="13" height="9"><path d="M1 8l5.5-7 5.5 7z" fill="#6a6a6a"/></svg>
<div class="a" style="left:524px;top:556px;width:11px;height:195px;background:#6e6e6e"></div>
<svg class="a" style="left:523px;top:857px" width="13" height="9"><path d="M1 1l5.5 7 5.5-7z" fill="#6a6a6a"/></svg>
<div class="a" style="left:254px;top:875px;width:286px;height:19px;background:#f0f0f0"></div>
<svg class="a" style="left:258px;top:877px" width="9" height="13"><path d="M8 1L1 6.5 8 12z" fill="#6a6a6a"/></svg>
<div class="a" style="left:274px;top:878px;width:207px;height:11px;background:#6e6e6e"></div>
<svg class="a" style="left:504px;top:877px" width="9" height="13"><path d="M1 1l7 5.5L1 12z" fill="#6a6a6a"/></svg>
<div class="a" style="left:288px;top:549px;width:7px;height:7px;border-radius:50%;background:#111"></div><div class="tpt" style="left:303px;top:545px">Texts here</div>
<div class="a" style="left:321px;top:579px;width:7px;height:7px;border-radius:50%;background:#111"></div><div class="tpt" style="left:337px;top:575px">Texts here</div>
<div class="a" style="left:355px;top:609px;width:7px;height:7px;border-radius:50%;background:#111"></div><div class="tpt" style="left:370px;top:605px">Texts here</div>
<div class="a" style="left:388px;top:639px;width:7px;height:7px;border-radius:50%;background:#111"></div><div class="tpt" style="left:403px;top:635px">Texts here</div>
<div class="a" style="left:388px;top:669px;width:7px;height:7px;border-radius:50%;background:#111"></div><div class="tpt" style="left:403px;top:665px">Texts here</div>
<div class="a" style="left:355px;top:699px;width:7px;height:7px;border-radius:50%;background:#111"></div><div class="tpt" style="left:370px;top:695px">Texts here</div>
<div class="a" style="left:423px;top:691px;width:1px;height:20px;background:#000"></div>
<div class="a" style="left:388px;top:729px;width:7px;height:7px;border-radius:50%;background:#111"></div><div class="tpt" style="left:403px;top:725px">Texts here</div>
<div class="a" style="left:422px;top:759px;width:7px;height:7px;border-radius:50%;background:#111"></div><div class="tpt" style="left:437px;top:755px">Texts here</div>
<div class="a" style="left:388px;top:789px;width:7px;height:7px;border-radius:50%;background:#111"></div><div class="tpt" style="left:403px;top:785px">Texts here</div>
<div class="a" style="left:321px;top:819px;width:7px;height:7px;border-radius:50%;background:#111"></div><div class="tpt" style="left:337px;top:815px">Texts here</div>
<div class="a" style="left:355px;top:849px;width:7px;height:7px;border-radius:50%;background:#111"></div><div class="tpt" style="left:370px;top:845px">Texts here</div>
<div class="a" style="left:253px;top:897px;width:288px;height:126px;background:#fff;border:1px solid #a9a9a9"></div>
<div class="t" style="left:258px;top:904px;font-size:13px;font-weight:bold;color:#333">Organization Chart</div>
<div class="t" style="left:262px;top:925px;font-size:13.2px;color:#333;line-height:17px">Use to show hierarchical information or<br>reporting relationships in an organization.<br>The assistant shape and the Org Chart<br>hanging layouts are available with this layout.</div>
<div class="t" style="left:263px;top:998px;font-size:13.2px;color:#333;text-decoration:underline">Learn more about SmartArt graphics</div>

<!-- right scrollbar -->
<div class="a" style="left:1897px;top:266px;width:23px;height:830px;background:#f4f4f4"></div>
<svg class="a" style="left:1903px;top:269px" width="13" height="10"><path d="M1 9l5.5-7.5 5.5 7.5z" fill="#6a6a6a"/></svg>
<div class="a" style="left:1903px;top:470px;width:11px;height:184px;border-radius:6px;background:#6e6e6e"></div>
<svg class="a" style="left:1903px;top:1028px" width="13" height="10"><path d="M1 1l5.5 7.5 5.5-7.5z" fill="#6a6a6a"/></svg>
<svg class="a" style="left:1902px;top:1046px" width="14" height="15"><path d="M1 7l6-6 6 6zM1 14l6-6 6 6z" fill="#6a6a6a"/></svg>
<svg class="a" style="left:1902px;top:1067px" width="14" height="15"><path d="M1 1l6 6 6-6zM1 8l6 6 6-6z" fill="#6a6a6a"/></svg>

<!-- STATUS BAR -->
<div class="a" style="left:0;top:1110px;width:1920px;height:1px;background:#e0e0e0"></div>
<div class="a" style="left:0;top:1111px;width:1920px;height:29px;background:#f3f3f3"></div>
<div class="status" style="left:10px">Slide 2 of 4</div>
<div class="status" style="left:117px">English (United States)</div>
<svg class="a" style="left:267px;top:1117px" width="19" height="19" viewBox="0 0 19 19"><circle cx="8" cy="3" r="2" fill="none" stroke="#444" stroke-width="1.2"/><path d="M2 6l6 2 6-2M8 8v4l-3 6M8 12l3 6" fill="none" stroke="#444" stroke-width="1.2"/><path d="M11 12l6 6M17 12l-6 6" stroke="#444" stroke-width="1.2"/></svg>
<div class="status" style="left:290px">Accessibility: Investigate</div>
<svg class="a" style="left:1259px;top:1116px" width="21" height="20" viewBox="0 0 21 20"><path d="M1 8h19M1 13h19M1 18h19M7 5l3.5-3.5L14 5" fill="none" stroke="#444" stroke-width="1.2"/></svg>
<div class="status" style="left:1282px">Notes</div>
<svg class="a" style="left:1337px;top:1117px" width="20" height="19" viewBox="0 0 20 19"><rect x="1" y="1" width="16" height="12" fill="none" stroke="#444" stroke-width="1.2"/><path d="M5 17h6" stroke="#444" stroke-width="1.2"/><circle cx="14" cy="14" r="3.5" fill="#f3f3f3" stroke="#444" stroke-width="1.2"/></svg>
<div class="status" style="left:1359px">Display Settings</div>
<div class="a" style="left:1475px;top:1114px;width:50px;height:26px;background:#e0e0e0"></div>
<svg class="a" style="left:1490px;top:1117px" width="20" height="18" viewBox="0 0 20 18"><rect x="1" y="1" width="18" height="16" fill="none" stroke="#444" stroke-width="1.3"/><path d="M5 1v16" stroke="#444" stroke-width="1.3"/><rect x="8" y="4" width="8" height="7" fill="none" stroke="#444" stroke-width="1.2"/></svg>
<svg class="a" style="left:1540px;top:1117px" width="20" height="18" viewBox="0 0 20 18"><rect x="1" y="1" width="7" height="6" fill="none" stroke="#444" stroke-width="1.3"/><rect x="11" y="1" width="7" height="6" fill="none" stroke="#444" stroke-width="1.3"/><rect x="1" y="10" width="7" height="6" fill="none" stroke="#444" stroke-width="1.3"/><rect x="11" y="10" width="7" height="6" fill="none" stroke="#444" stroke-width="1.3"/></svg>
<svg class="a" style="left:1590px;top:1117px" width="20" height="18" viewBox="0 0 20 18"><path d="M1 2h7l2 2 2-2h7v14h-7l-2 1-2-1H1z" fill="none" stroke="#444" stroke-width="1.3"/><path d="M10 4v13M3 6h4M3 9h4M13 6h4M13 9h4" stroke="#444" stroke-width="1"/></svg>
<svg class="a" style="left:1640px;top:1116px" width="20" height="20" viewBox="0 0 20 20"><path d="M1 2h18M3 2v10h14V2M10 12v7M6 19h8" fill="none" stroke="#444" stroke-width="1.3"/></svg>
<div class="a" style="left:1680px;top:1126px;width:11px;height:1px;background:#444"></div>
<div class="a" style="left:1698px;top:1126px;width:124px;height:1px;background:#777"></div>
<div class="a" style="left:1760px;top:1121px;width:1px;height:11px;background:#777"></div>
<div class="a" style="left:1749px;top:1119px;width:6px;height:15px;background:#555"></div>
<div class="a" style="left:1828px;top:1126px;width:11px;height:1px;background:#444"></div>
<div class="a" style="left:1833px;top:1121px;width:1px;height:11px;background:#444"></div>
<div class="status" style="left:1854px;color:#444">87%</div>
<svg class="a" style="left:1895px;top:1117px" width="19" height="19" viewBox="0 0 19 19"><rect x="5" y="5" width="9" height="9" fill="none" stroke="#444" stroke-width="1.2"/><path d="M9.5 1l-2 2h4zM9.5 18l-2-2h4zM1 9.5l2-2v4zM18 9.5l-2-2v4z" fill="#444" stroke="#444"/></svg>
</body></html>
